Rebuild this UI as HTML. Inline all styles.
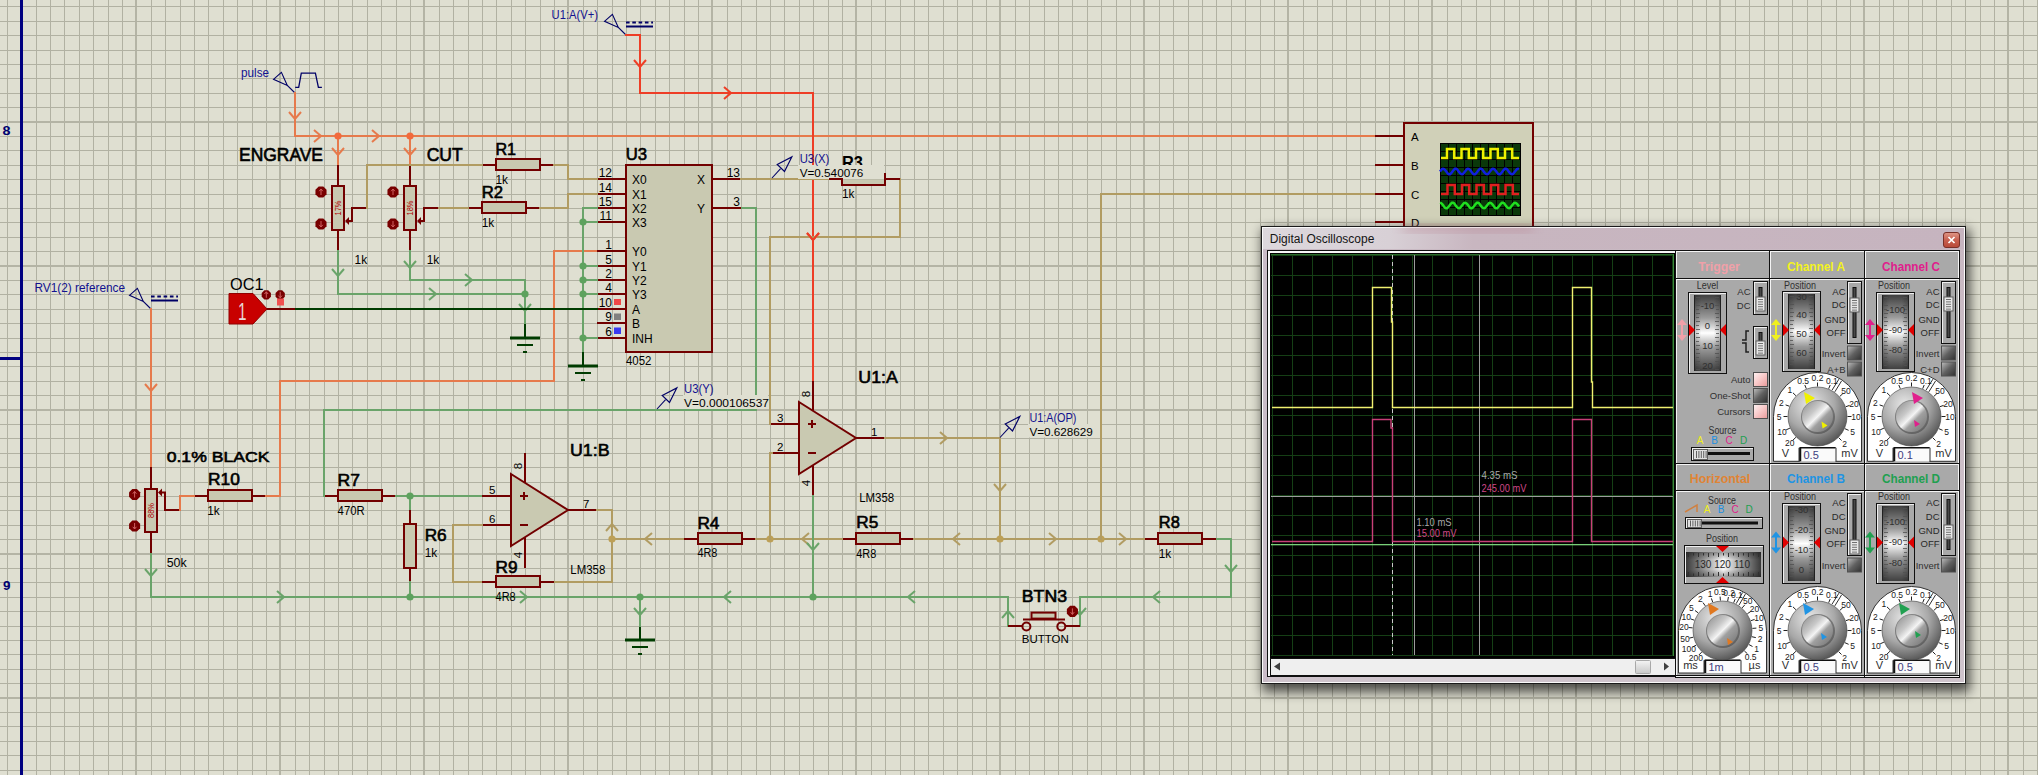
<!DOCTYPE html>
<html><head><meta charset="utf-8"><style>
html,body{margin:0;padding:0;background:#dfdfd1;overflow:hidden;}
svg{display:block;font-family:"Liberation Sans",sans-serif;}
</style></head><body>
<svg width="2038" height="775" viewBox="0 0 2038 775">
<rect width="2038" height="775" fill="#dfdfd1"/>
<g><rect x="7" y="0" width="1" height="775" fill="#b1b1a2"/><rect x="21" y="0" width="1" height="775" fill="#b1b1a2"/><rect x="36" y="0" width="1" height="775" fill="#b1b1a2"/><rect x="50" y="0" width="1" height="775" fill="#b1b1a2"/><rect x="64" y="0" width="1" height="775" fill="#b1b1a2"/><rect x="79" y="0" width="1" height="775" fill="#b1b1a2"/><rect x="93" y="0" width="1" height="775" fill="#b1b1a2"/><rect x="108" y="0" width="1" height="775" fill="#b1b1a2"/><rect x="122" y="0" width="1" height="775" fill="#b1b1a2"/><rect x="135" y="0" width="2" height="775" fill="#b4b4a5"/><rect x="151" y="0" width="1" height="775" fill="#b1b1a2"/><rect x="165" y="0" width="1" height="775" fill="#b1b1a2"/><rect x="180" y="0" width="1" height="775" fill="#b1b1a2"/><rect x="194" y="0" width="1" height="775" fill="#b1b1a2"/><rect x="208" y="0" width="1" height="775" fill="#b1b1a2"/><rect x="223" y="0" width="1" height="775" fill="#b1b1a2"/><rect x="237" y="0" width="1" height="775" fill="#b1b1a2"/><rect x="252" y="0" width="1" height="775" fill="#b1b1a2"/><rect x="266" y="0" width="1" height="775" fill="#b1b1a2"/><rect x="279" y="0" width="2" height="775" fill="#b4b4a5"/><rect x="295" y="0" width="1" height="775" fill="#b1b1a2"/><rect x="309" y="0" width="1" height="775" fill="#b1b1a2"/><rect x="324" y="0" width="1" height="775" fill="#b1b1a2"/><rect x="338" y="0" width="1" height="775" fill="#b1b1a2"/><rect x="352" y="0" width="1" height="775" fill="#b1b1a2"/><rect x="367" y="0" width="1" height="775" fill="#b1b1a2"/><rect x="381" y="0" width="1" height="775" fill="#b1b1a2"/><rect x="396" y="0" width="1" height="775" fill="#b1b1a2"/><rect x="410" y="0" width="1" height="775" fill="#b1b1a2"/><rect x="423" y="0" width="2" height="775" fill="#b4b4a5"/><rect x="439" y="0" width="1" height="775" fill="#b1b1a2"/><rect x="453" y="0" width="1" height="775" fill="#b1b1a2"/><rect x="468" y="0" width="1" height="775" fill="#b1b1a2"/><rect x="482" y="0" width="1" height="775" fill="#b1b1a2"/><rect x="496" y="0" width="1" height="775" fill="#b1b1a2"/><rect x="511" y="0" width="1" height="775" fill="#b1b1a2"/><rect x="525" y="0" width="1" height="775" fill="#b1b1a2"/><rect x="540" y="0" width="1" height="775" fill="#b1b1a2"/><rect x="554" y="0" width="1" height="775" fill="#b1b1a2"/><rect x="567" y="0" width="2" height="775" fill="#b4b4a5"/><rect x="583" y="0" width="1" height="775" fill="#b1b1a2"/><rect x="597" y="0" width="1" height="775" fill="#b1b1a2"/><rect x="612" y="0" width="1" height="775" fill="#b1b1a2"/><rect x="626" y="0" width="1" height="775" fill="#b1b1a2"/><rect x="640" y="0" width="1" height="775" fill="#b1b1a2"/><rect x="655" y="0" width="1" height="775" fill="#b1b1a2"/><rect x="669" y="0" width="1" height="775" fill="#b1b1a2"/><rect x="684" y="0" width="1" height="775" fill="#b1b1a2"/><rect x="698" y="0" width="1" height="775" fill="#b1b1a2"/><rect x="711" y="0" width="2" height="775" fill="#b4b4a5"/><rect x="727" y="0" width="1" height="775" fill="#b1b1a2"/><rect x="741" y="0" width="1" height="775" fill="#b1b1a2"/><rect x="756" y="0" width="1" height="775" fill="#b1b1a2"/><rect x="770" y="0" width="1" height="775" fill="#b1b1a2"/><rect x="784" y="0" width="1" height="775" fill="#b1b1a2"/><rect x="799" y="0" width="1" height="775" fill="#b1b1a2"/><rect x="813" y="0" width="1" height="775" fill="#b1b1a2"/><rect x="828" y="0" width="1" height="775" fill="#b1b1a2"/><rect x="842" y="0" width="1" height="775" fill="#b1b1a2"/><rect x="855" y="0" width="2" height="775" fill="#b4b4a5"/><rect x="871" y="0" width="1" height="775" fill="#b1b1a2"/><rect x="885" y="0" width="1" height="775" fill="#b1b1a2"/><rect x="900" y="0" width="1" height="775" fill="#b1b1a2"/><rect x="914" y="0" width="1" height="775" fill="#b1b1a2"/><rect x="928" y="0" width="1" height="775" fill="#b1b1a2"/><rect x="943" y="0" width="1" height="775" fill="#b1b1a2"/><rect x="957" y="0" width="1" height="775" fill="#b1b1a2"/><rect x="972" y="0" width="1" height="775" fill="#b1b1a2"/><rect x="986" y="0" width="1" height="775" fill="#b1b1a2"/><rect x="999" y="0" width="2" height="775" fill="#b4b4a5"/><rect x="1015" y="0" width="1" height="775" fill="#b1b1a2"/><rect x="1029" y="0" width="1" height="775" fill="#b1b1a2"/><rect x="1044" y="0" width="1" height="775" fill="#b1b1a2"/><rect x="1058" y="0" width="1" height="775" fill="#b1b1a2"/><rect x="1072" y="0" width="1" height="775" fill="#b1b1a2"/><rect x="1087" y="0" width="1" height="775" fill="#b1b1a2"/><rect x="1101" y="0" width="1" height="775" fill="#b1b1a2"/><rect x="1116" y="0" width="1" height="775" fill="#b1b1a2"/><rect x="1130" y="0" width="1" height="775" fill="#b1b1a2"/><rect x="1143" y="0" width="2" height="775" fill="#b4b4a5"/><rect x="1159" y="0" width="1" height="775" fill="#b1b1a2"/><rect x="1173" y="0" width="1" height="775" fill="#b1b1a2"/><rect x="1188" y="0" width="1" height="775" fill="#b1b1a2"/><rect x="1202" y="0" width="1" height="775" fill="#b1b1a2"/><rect x="1216" y="0" width="1" height="775" fill="#b1b1a2"/><rect x="1231" y="0" width="1" height="775" fill="#b1b1a2"/><rect x="1245" y="0" width="1" height="775" fill="#b1b1a2"/><rect x="1260" y="0" width="1" height="775" fill="#b1b1a2"/><rect x="1274" y="0" width="1" height="775" fill="#b1b1a2"/><rect x="1287" y="0" width="2" height="775" fill="#b4b4a5"/><rect x="1303" y="0" width="1" height="775" fill="#b1b1a2"/><rect x="1317" y="0" width="1" height="775" fill="#b1b1a2"/><rect x="1332" y="0" width="1" height="775" fill="#b1b1a2"/><rect x="1346" y="0" width="1" height="775" fill="#b1b1a2"/><rect x="1360" y="0" width="1" height="775" fill="#b1b1a2"/><rect x="1375" y="0" width="1" height="775" fill="#b1b1a2"/><rect x="1389" y="0" width="1" height="775" fill="#b1b1a2"/><rect x="1404" y="0" width="1" height="775" fill="#b1b1a2"/><rect x="1418" y="0" width="1" height="775" fill="#b1b1a2"/><rect x="1431" y="0" width="2" height="775" fill="#b4b4a5"/><rect x="1447" y="0" width="1" height="775" fill="#b1b1a2"/><rect x="1461" y="0" width="1" height="775" fill="#b1b1a2"/><rect x="1476" y="0" width="1" height="775" fill="#b1b1a2"/><rect x="1490" y="0" width="1" height="775" fill="#b1b1a2"/><rect x="1504" y="0" width="1" height="775" fill="#b1b1a2"/><rect x="1519" y="0" width="1" height="775" fill="#b1b1a2"/><rect x="1533" y="0" width="1" height="775" fill="#b1b1a2"/><rect x="1548" y="0" width="1" height="775" fill="#b1b1a2"/><rect x="1562" y="0" width="1" height="775" fill="#b1b1a2"/><rect x="1575" y="0" width="2" height="775" fill="#b4b4a5"/><rect x="1591" y="0" width="1" height="775" fill="#b1b1a2"/><rect x="1605" y="0" width="1" height="775" fill="#b1b1a2"/><rect x="1620" y="0" width="1" height="775" fill="#b1b1a2"/><rect x="1634" y="0" width="1" height="775" fill="#b1b1a2"/><rect x="1648" y="0" width="1" height="775" fill="#b1b1a2"/><rect x="1663" y="0" width="1" height="775" fill="#b1b1a2"/><rect x="1677" y="0" width="1" height="775" fill="#b1b1a2"/><rect x="1692" y="0" width="1" height="775" fill="#b1b1a2"/><rect x="1706" y="0" width="1" height="775" fill="#b1b1a2"/><rect x="1719" y="0" width="2" height="775" fill="#b4b4a5"/><rect x="1735" y="0" width="1" height="775" fill="#b1b1a2"/><rect x="1749" y="0" width="1" height="775" fill="#b1b1a2"/><rect x="1764" y="0" width="1" height="775" fill="#b1b1a2"/><rect x="1778" y="0" width="1" height="775" fill="#b1b1a2"/><rect x="1792" y="0" width="1" height="775" fill="#b1b1a2"/><rect x="1807" y="0" width="1" height="775" fill="#b1b1a2"/><rect x="1821" y="0" width="1" height="775" fill="#b1b1a2"/><rect x="1836" y="0" width="1" height="775" fill="#b1b1a2"/><rect x="1850" y="0" width="1" height="775" fill="#b1b1a2"/><rect x="1863" y="0" width="2" height="775" fill="#b4b4a5"/><rect x="1879" y="0" width="1" height="775" fill="#b1b1a2"/><rect x="1893" y="0" width="1" height="775" fill="#b1b1a2"/><rect x="1908" y="0" width="1" height="775" fill="#b1b1a2"/><rect x="1922" y="0" width="1" height="775" fill="#b1b1a2"/><rect x="1936" y="0" width="1" height="775" fill="#b1b1a2"/><rect x="1951" y="0" width="1" height="775" fill="#b1b1a2"/><rect x="1965" y="0" width="1" height="775" fill="#b1b1a2"/><rect x="1980" y="0" width="1" height="775" fill="#b1b1a2"/><rect x="1994" y="0" width="1" height="775" fill="#b1b1a2"/><rect x="2007" y="0" width="2" height="775" fill="#b4b4a5"/><rect x="2023" y="0" width="1" height="775" fill="#b1b1a2"/><rect x="2037" y="0" width="1" height="775" fill="#b1b1a2"/><rect x="0" y="6" width="2038" height="1" fill="#b1b1a2"/><rect x="0" y="21" width="2038" height="1" fill="#b1b1a2"/><rect x="0" y="35" width="2038" height="1" fill="#b1b1a2"/><rect x="0" y="50" width="2038" height="1" fill="#b1b1a2"/><rect x="0" y="64" width="2038" height="1" fill="#b1b1a2"/><rect x="0" y="78" width="2038" height="1" fill="#b1b1a2"/><rect x="0" y="93" width="2038" height="1" fill="#b1b1a2"/><rect x="0" y="107" width="2038" height="1" fill="#b1b1a2"/><rect x="0" y="121" width="2038" height="2" fill="#b4b4a5"/><rect x="0" y="136" width="2038" height="1" fill="#b1b1a2"/><rect x="0" y="150" width="2038" height="1" fill="#b1b1a2"/><rect x="0" y="165" width="2038" height="1" fill="#b1b1a2"/><rect x="0" y="179" width="2038" height="1" fill="#b1b1a2"/><rect x="0" y="194" width="2038" height="1" fill="#b1b1a2"/><rect x="0" y="208" width="2038" height="1" fill="#b1b1a2"/><rect x="0" y="222" width="2038" height="1" fill="#b1b1a2"/><rect x="0" y="237" width="2038" height="1" fill="#b1b1a2"/><rect x="0" y="251" width="2038" height="1" fill="#b1b1a2"/><rect x="0" y="265" width="2038" height="2" fill="#b4b4a5"/><rect x="0" y="280" width="2038" height="1" fill="#b1b1a2"/><rect x="0" y="294" width="2038" height="1" fill="#b1b1a2"/><rect x="0" y="309" width="2038" height="1" fill="#b1b1a2"/><rect x="0" y="323" width="2038" height="1" fill="#b1b1a2"/><rect x="0" y="338" width="2038" height="1" fill="#b1b1a2"/><rect x="0" y="352" width="2038" height="1" fill="#b1b1a2"/><rect x="0" y="366" width="2038" height="1" fill="#b1b1a2"/><rect x="0" y="381" width="2038" height="1" fill="#b1b1a2"/><rect x="0" y="395" width="2038" height="1" fill="#b1b1a2"/><rect x="0" y="409" width="2038" height="2" fill="#b4b4a5"/><rect x="0" y="424" width="2038" height="1" fill="#b1b1a2"/><rect x="0" y="438" width="2038" height="1" fill="#b1b1a2"/><rect x="0" y="453" width="2038" height="1" fill="#b1b1a2"/><rect x="0" y="467" width="2038" height="1" fill="#b1b1a2"/><rect x="0" y="482" width="2038" height="1" fill="#b1b1a2"/><rect x="0" y="496" width="2038" height="1" fill="#b1b1a2"/><rect x="0" y="510" width="2038" height="1" fill="#b1b1a2"/><rect x="0" y="525" width="2038" height="1" fill="#b1b1a2"/><rect x="0" y="539" width="2038" height="1" fill="#b1b1a2"/><rect x="0" y="553" width="2038" height="2" fill="#b4b4a5"/><rect x="0" y="568" width="2038" height="1" fill="#b1b1a2"/><rect x="0" y="582" width="2038" height="1" fill="#b1b1a2"/><rect x="0" y="597" width="2038" height="1" fill="#b1b1a2"/><rect x="0" y="611" width="2038" height="1" fill="#b1b1a2"/><rect x="0" y="626" width="2038" height="1" fill="#b1b1a2"/><rect x="0" y="640" width="2038" height="1" fill="#b1b1a2"/><rect x="0" y="654" width="2038" height="1" fill="#b1b1a2"/><rect x="0" y="669" width="2038" height="1" fill="#b1b1a2"/><rect x="0" y="683" width="2038" height="1" fill="#b1b1a2"/><rect x="0" y="697" width="2038" height="2" fill="#b4b4a5"/><rect x="0" y="712" width="2038" height="1" fill="#b1b1a2"/><rect x="0" y="726" width="2038" height="1" fill="#b1b1a2"/><rect x="0" y="741" width="2038" height="1" fill="#b1b1a2"/><rect x="0" y="755" width="2038" height="1" fill="#b1b1a2"/><rect x="0" y="770" width="2038" height="1" fill="#b1b1a2"/></g><rect x="20" y="0" width="3" height="775" fill="#000080"/><rect x="0" y="357" width="20" height="3" fill="#000080"/><text x="2.5" y="134.6" font-size="13.5" font-weight="bold" fill="#000070" textLength="8" lengthAdjust="spacingAndGlyphs">8</text><text x="3" y="590" font-size="13.5" font-weight="bold" fill="#000070" textLength="7.5" lengthAdjust="spacingAndGlyphs">9</text><polygon points="273.5,79.3 281.4,72.3 287.3,85.4" fill="none" stroke="#000066" stroke-width="1.1"/><line x1="287.3" y1="85.4" x2="295" y2="93" stroke="#000066" stroke-width="1.1" stroke-linecap="butt"/><text x="241" y="77" font-size="12" fill="#121290" textLength="28" lengthAdjust="spacingAndGlyphs">pulse</text><polyline points="295.2,87.3 298.7,87.3 301.3,73.1 315.4,73.1 318.4,87.3 321.9,87.3" fill="none" stroke="#000066" stroke-width="1.3"/><polyline points="295,93 295,136 1375,136" fill="none" stroke="#e67a4c" stroke-width="2" stroke-linejoin="miter" stroke-linecap="square"/><polyline points="289,112 295,119 301,112" fill="none" stroke="#e67a4c" stroke-width="2" stroke-linejoin="miter"/><polyline points="314,130 321,136 314,142" fill="none" stroke="#e67a4c" stroke-width="2" stroke-linejoin="miter"/><polyline points="372,130 379,136 372,142" fill="none" stroke="#e67a4c" stroke-width="2" stroke-linejoin="miter"/><polyline points="338,136 338,165" fill="none" stroke="#e67a4c" stroke-width="2" stroke-linejoin="miter" stroke-linecap="square"/><polyline points="332,148 338,155 344,148" fill="none" stroke="#e67a4c" stroke-width="2" stroke-linejoin="miter"/><circle cx="338" cy="136" r="3.6" fill="#f26a3c"/><polyline points="410,136 410,165" fill="none" stroke="#e67a4c" stroke-width="2" stroke-linejoin="miter" stroke-linecap="square"/><polyline points="404,148 410,155 416,148" fill="none" stroke="#e67a4c" stroke-width="2" stroke-linejoin="miter"/><circle cx="410" cy="136" r="3.6" fill="#f26a3c"/><line x1="626" y1="22.4" x2="653" y2="22.4" stroke="#000066" stroke-width="2" stroke-dasharray="3.6,2.7"/><line x1="626" y1="26.5" x2="653" y2="26.5" stroke="#000066" stroke-width="2" stroke-linecap="butt"/><polygon points="604.5,21.3 612.4,14.3 618.3,27.4" fill="none" stroke="#000066" stroke-width="1.1"/><line x1="618.3" y1="27.4" x2="626" y2="35" stroke="#000066" stroke-width="1.1" stroke-linecap="butt"/><text x="551.6" y="19.4" font-size="12" fill="#121290" textLength="46.4" lengthAdjust="spacingAndGlyphs">U1:A(V+)</text><polyline points="626,35 640,35 640,93 813,93 813,381" fill="none" stroke="#ee3e26" stroke-width="2" stroke-linejoin="miter" stroke-linecap="square"/><polyline points="634,60 640,67 646,60" fill="none" stroke="#ee3e26" stroke-width="2" stroke-linejoin="miter"/><polyline points="724,87 731,93 724,99" fill="none" stroke="#ee3e26" stroke-width="2" stroke-linejoin="miter"/><polyline points="807,233 813,240 819,233" fill="none" stroke="#ee3e26" stroke-width="2" stroke-linejoin="miter"/><line x1="151" y1="296.4" x2="178" y2="296.4" stroke="#000066" stroke-width="2" stroke-dasharray="3.6,2.7"/><line x1="151" y1="300.5" x2="178" y2="300.5" stroke="#000066" stroke-width="2" stroke-linecap="butt"/><polygon points="129.5,295.3 137.4,288.3 143.3,301.4" fill="none" stroke="#000066" stroke-width="1.1"/><line x1="143.3" y1="301.4" x2="151" y2="309" stroke="#000066" stroke-width="1.1" stroke-linecap="butt"/><text x="34.5" y="291.8" font-size="12" fill="#121290" textLength="90.6" lengthAdjust="spacingAndGlyphs">RV1(2) reference</text><polyline points="151,309 151,467" fill="none" stroke="#e67a4c" stroke-width="2" stroke-linejoin="miter" stroke-linecap="square"/><polyline points="145,384 151,391 157,384" fill="none" stroke="#e67a4c" stroke-width="2" stroke-linejoin="miter"/><line x1="338" y1="165" x2="338" y2="186" stroke="#720000" stroke-width="2" stroke-linecap="butt"/><line x1="338" y1="230" x2="338" y2="251" stroke="#720000" stroke-width="2" stroke-linecap="butt"/><rect x="332" y="186" width="12" height="44" fill="#c9c9b1" stroke="#720000" stroke-width="2"/><polygon points="345,221 349,217 349,225" fill="#720000"/><polyline points="348,221 352,221 352,208 367,208" fill="none" stroke="#720000" stroke-width="2"/><text x="0" y="0" font-size="8.5" fill="#b00000" transform="translate(341,208.0) rotate(-90)" text-anchor="middle" textLength="15" lengthAdjust="spacingAndGlyphs">17%</text><polygon points="326.54,194.3 323.3,197.54 318.7,197.54 315.46,194.3 315.46,189.7 318.7,186.46 323.3,186.46 326.54,189.7" fill="#780000"/><path d="M319.2,191.2 L321,189 L322.8,191.2 M321,189 L321,195" stroke="#d06060" stroke-width="1" fill="none"/><polygon points="326.54,226.3 323.3,229.54 318.7,229.54 315.46,226.3 315.46,221.7 318.7,218.46 323.3,218.46 326.54,221.7" fill="#780000"/><path d="M319.2,224.8 L321,227 L322.8,224.8 M321,221 L321,227" stroke="#d06060" stroke-width="1" fill="none"/><line x1="410" y1="165" x2="410" y2="186" stroke="#720000" stroke-width="2" stroke-linecap="butt"/><line x1="410" y1="230" x2="410" y2="251" stroke="#720000" stroke-width="2" stroke-linecap="butt"/><rect x="404" y="186" width="12" height="44" fill="#c9c9b1" stroke="#720000" stroke-width="2"/><polygon points="417,221 421,217 421,225" fill="#720000"/><polyline points="420,221 424,221 424,208 439,208" fill="none" stroke="#720000" stroke-width="2"/><text x="0" y="0" font-size="8.5" fill="#b00000" transform="translate(413,208.0) rotate(-90)" text-anchor="middle" textLength="15" lengthAdjust="spacingAndGlyphs">18%</text><polygon points="398.54,194.3 395.3,197.54 390.7,197.54 387.46,194.3 387.46,189.7 390.7,186.46 395.3,186.46 398.54,189.7" fill="#780000"/><path d="M391.2,191.2 L393,189 L394.8,191.2 M393,189 L393,195" stroke="#d06060" stroke-width="1" fill="none"/><polygon points="398.54,226.3 395.3,229.54 390.7,229.54 387.46,226.3 387.46,221.7 390.7,218.46 395.3,218.46 398.54,221.7" fill="#780000"/><path d="M391.2,224.8 L393,227 L394.8,224.8 M393,221 L393,227" stroke="#d06060" stroke-width="1" fill="none"/><line x1="151" y1="467" x2="151" y2="489" stroke="#720000" stroke-width="2" stroke-linecap="butt"/><line x1="151" y1="532" x2="151" y2="554" stroke="#720000" stroke-width="2" stroke-linecap="butt"/><rect x="145" y="489" width="12" height="43" fill="#c9c9b1" stroke="#720000" stroke-width="2"/><polygon points="158,492.5 162,488.5 162,496.5" fill="#720000"/><polyline points="161,492.5 165,492.5 165,510 180,510" fill="none" stroke="#720000" stroke-width="2"/><text x="0" y="0" font-size="8.5" fill="#b00000" transform="translate(154,510.5) rotate(-90)" text-anchor="middle" textLength="15" lengthAdjust="spacingAndGlyphs">88%</text><polygon points="140.14,496.8 136.9,500.04 132.3,500.04 129.06,496.8 129.06,492.2 132.3,488.96 136.9,488.96 140.14,492.2" fill="#780000"/><path d="M132.79999999999998,493.7 L134.6,491.5 L136.4,493.7 M134.6,491.5 L134.6,497.5" stroke="#d06060" stroke-width="1" fill="none"/><polygon points="140.14,528.3 136.9,531.54 132.3,531.54 129.06,528.3 129.06,523.7 132.3,520.46 136.9,520.46 140.14,523.7" fill="#780000"/><path d="M132.79999999999998,526.8 L134.6,529 L136.4,526.8 M134.6,523 L134.6,529" stroke="#d06060" stroke-width="1" fill="none"/><text x="239" y="161" font-size="17.5" fill="#000" stroke="#000" stroke-width="0.6" textLength="84" lengthAdjust="spacingAndGlyphs">ENGRAVE</text><text x="426.7" y="161" font-size="17.5" fill="#000" stroke="#000" stroke-width="0.6" textLength="36" lengthAdjust="spacingAndGlyphs">CUT</text><text x="354.6" y="264" font-size="12" fill="#000" textLength="12.5" lengthAdjust="spacingAndGlyphs">1k</text><text x="426.8" y="264" font-size="12" fill="#000" textLength="12.5" lengthAdjust="spacingAndGlyphs">1k</text><text x="166.7" y="567" font-size="12" fill="#000" textLength="20" lengthAdjust="spacingAndGlyphs">50k</text><line x1="194" y1="496" x2="208" y2="496" stroke="#720000" stroke-width="2" stroke-linecap="butt"/><line x1="252" y1="496" x2="266" y2="496" stroke="#720000" stroke-width="2" stroke-linecap="butt"/><rect x="208" y="490" width="44" height="11" fill="#c9c9b1" stroke="#720000" stroke-width="2"/><polyline points="180,510 180,496 194,496" fill="none" stroke="#e67a4c" stroke-width="2" stroke-linejoin="miter" stroke-linecap="square"/><text x="208" y="484.7" font-size="16" fill="#000" stroke="#000" stroke-width="0.6" textLength="31.8" lengthAdjust="spacingAndGlyphs">R10</text><text x="207.3" y="515" font-size="12" fill="#000" textLength="12.5" lengthAdjust="spacingAndGlyphs">1k</text><text x="166.7" y="462.2" font-size="15.5" fill="#000" stroke="#000" stroke-width="0.6" textLength="102.7" lengthAdjust="spacingAndGlyphs">0.1% BLACK</text><polyline points="266,496 280,496 280,381 554,381 554,251 597,251" fill="none" stroke="#e67a4c" stroke-width="2" stroke-linejoin="miter" stroke-linecap="square"/><polyline points="151,554 151,597 1008,597 1008,626" fill="none" stroke="#6aa46a" stroke-width="2" stroke-linejoin="miter" stroke-linecap="square"/><polyline points="145,569 151,576 157,569" fill="none" stroke="#6aa46a" stroke-width="2" stroke-linejoin="miter"/><polyline points="277,591 284,597 277,603" fill="none" stroke="#6aa46a" stroke-width="2" stroke-linejoin="miter"/><polyline points="520,591 527,597 520,603" fill="none" stroke="#6aa46a" stroke-width="2" stroke-linejoin="miter"/><polyline points="731,591 724,597 731,603" fill="none" stroke="#6aa46a" stroke-width="2" stroke-linejoin="miter"/><polyline points="915,591 908,597 915,603" fill="none" stroke="#6aa46a" stroke-width="2" stroke-linejoin="miter"/><polyline points="1002,618 1008,611 1014,618" fill="none" stroke="#6aa46a" stroke-width="2" stroke-linejoin="miter"/><polyline points="1216,539 1231,539 1231,597 1080,597 1080,626" fill="none" stroke="#6aa46a" stroke-width="2" stroke-linejoin="miter" stroke-linecap="square"/><polyline points="1225,565 1231,572 1237,565" fill="none" stroke="#6aa46a" stroke-width="2" stroke-linejoin="miter"/><polyline points="1160,591 1153,597 1160,603" fill="none" stroke="#6aa46a" stroke-width="2" stroke-linejoin="miter"/><polyline points="1074,608 1080,615 1086,608" fill="none" stroke="#6aa46a" stroke-width="2" stroke-linejoin="miter"/><line x1="324" y1="496" x2="338" y2="496" stroke="#720000" stroke-width="2" stroke-linecap="butt"/><line x1="382" y1="496" x2="396" y2="496" stroke="#720000" stroke-width="2" stroke-linecap="butt"/><rect x="338" y="490" width="44" height="11" fill="#c9c9b1" stroke="#720000" stroke-width="2"/><text x="337.6" y="486" font-size="16" fill="#000" stroke="#000" stroke-width="0.6" textLength="22.4" lengthAdjust="spacingAndGlyphs">R7</text><text x="337.6" y="515" font-size="12" fill="#000" textLength="27" lengthAdjust="spacingAndGlyphs">470R</text><polyline points="324,496 324,410 756,410 756,208 741,208" fill="none" stroke="#6aa46a" stroke-width="2" stroke-linejoin="miter" stroke-linecap="square"/><polyline points="396,496 482,496" fill="none" stroke="#6aa46a" stroke-width="2" stroke-linejoin="miter" stroke-linecap="square"/><polyline points="410,496 410,510" fill="none" stroke="#6aa46a" stroke-width="2" stroke-linejoin="miter" stroke-linecap="square"/><circle cx="410" cy="496" r="3.6" fill="#5ea25e"/><line x1="410" y1="510" x2="410" y2="524" stroke="#720000" stroke-width="2" stroke-linecap="butt"/><line x1="410" y1="568" x2="410" y2="582" stroke="#720000" stroke-width="2" stroke-linecap="butt"/><rect x="404" y="524" width="12" height="44" fill="#c9c9b1" stroke="#720000" stroke-width="2"/><polyline points="410,582 410,597" fill="none" stroke="#6aa46a" stroke-width="2" stroke-linejoin="miter" stroke-linecap="square"/><circle cx="410" cy="597" r="3.6" fill="#5ea25e"/><text x="424.7" y="541.3" font-size="16" fill="#000" stroke="#000" stroke-width="0.6" textLength="22" lengthAdjust="spacingAndGlyphs">R6</text><text x="424.7" y="556.7" font-size="12" fill="#000" textLength="12.5" lengthAdjust="spacingAndGlyphs">1k</text><line x1="482" y1="496" x2="511" y2="496" stroke="#720000" stroke-width="2" stroke-linecap="butt"/><line x1="482" y1="525" x2="511" y2="525" stroke="#720000" stroke-width="2" stroke-linecap="butt"/><line x1="568" y1="510" x2="597" y2="510" stroke="#720000" stroke-width="2" stroke-linecap="butt"/><line x1="525" y1="453" x2="525" y2="482.8421052631579" stroke="#720000" stroke-width="2" stroke-linecap="butt"/><line x1="525" y1="537.1578947368421" x2="525" y2="568" stroke="#720000" stroke-width="2" stroke-linecap="butt"/><polygon points="511,474 568,510 511,546" fill="#c9c9b1" stroke="#720000" stroke-width="2" stroke-linejoin="miter"/><path d="M520,496 h8 M524,492 v8" stroke="#720000" stroke-width="2"/><path d="M520,525 h8" stroke="#720000" stroke-width="2"/><text x="489" y="494" font-size="11.5" fill="#000">5</text><text x="489" y="523" font-size="11.5" fill="#000">6</text><text x="583" y="508" font-size="11.5" fill="#000">7</text><text x="0" y="0" font-size="11.5" transform="translate(522,466) rotate(-90)" text-anchor="middle">8</text><text x="0" y="0" font-size="11.5" transform="translate(522,555) rotate(-90)" text-anchor="middle">4</text><text x="570" y="456" font-size="16.5" fill="#000" stroke="#000" stroke-width="0.6" textLength="39.5" lengthAdjust="spacingAndGlyphs">U1:B</text><text x="570.3" y="574" font-size="12" fill="#000" textLength="35" lengthAdjust="spacingAndGlyphs">LM358</text><line x1="770" y1="424" x2="799" y2="424" stroke="#720000" stroke-width="2" stroke-linecap="butt"/><line x1="770" y1="453" x2="799" y2="453" stroke="#720000" stroke-width="2" stroke-linecap="butt"/><line x1="856" y1="438" x2="885" y2="438" stroke="#720000" stroke-width="2" stroke-linecap="butt"/><line x1="813" y1="381" x2="813" y2="410.8421052631579" stroke="#720000" stroke-width="2" stroke-linecap="butt"/><line x1="813" y1="465.1578947368421" x2="813" y2="496" stroke="#720000" stroke-width="2" stroke-linecap="butt"/><polygon points="799,402 856,438 799,474" fill="#c9c9b1" stroke="#720000" stroke-width="2" stroke-linejoin="miter"/><path d="M808,424 h8 M812,420 v8" stroke="#720000" stroke-width="2"/><path d="M808,453 h8" stroke="#720000" stroke-width="2"/><text x="777" y="422" font-size="11.5" fill="#000">3</text><text x="777" y="451" font-size="11.5" fill="#000">2</text><text x="871" y="436" font-size="11.5" fill="#000">1</text><text x="0" y="0" font-size="11.5" transform="translate(810,394) rotate(-90)" text-anchor="middle">8</text><text x="0" y="0" font-size="11.5" transform="translate(810,483) rotate(-90)" text-anchor="middle">4</text><text x="858.3" y="383.3" font-size="16.5" fill="#000" stroke="#000" stroke-width="0.6" textLength="39.5" lengthAdjust="spacingAndGlyphs">U1:A</text><text x="859.2" y="501.6" font-size="12" fill="#000" textLength="35" lengthAdjust="spacingAndGlyphs">LM358</text><polyline points="597,510 612,510 612,582 554,582" fill="none" stroke="#b19c62" stroke-width="2" stroke-linejoin="miter" stroke-linecap="square"/><polyline points="606,531 612,524 618,531" fill="none" stroke="#b19c62" stroke-width="2" stroke-linejoin="miter"/><polyline points="612,539 684,539" fill="none" stroke="#b19c62" stroke-width="2" stroke-linejoin="miter" stroke-linecap="square"/><polyline points="652,533 645,539 652,545" fill="none" stroke="#b19c62" stroke-width="2" stroke-linejoin="miter"/><circle cx="612" cy="539" r="3.6" fill="#bda057"/><polyline points="482,525 453,525 453,582 482,582" fill="none" stroke="#b19c62" stroke-width="2" stroke-linejoin="miter" stroke-linecap="square"/><line x1="482" y1="582" x2="496" y2="582" stroke="#720000" stroke-width="2" stroke-linecap="butt"/><line x1="540" y1="582" x2="554" y2="582" stroke="#720000" stroke-width="2" stroke-linecap="butt"/><rect x="496" y="576" width="44" height="11" fill="#c9c9b1" stroke="#720000" stroke-width="2"/><text x="495.6" y="573" font-size="16" fill="#000" stroke="#000" stroke-width="0.6" textLength="22" lengthAdjust="spacingAndGlyphs">R9</text><text x="495.6" y="601" font-size="12" fill="#000" textLength="20" lengthAdjust="spacingAndGlyphs">4R8</text><line x1="684" y1="539" x2="698" y2="539" stroke="#720000" stroke-width="2" stroke-linecap="butt"/><line x1="742" y1="539" x2="756" y2="539" stroke="#720000" stroke-width="2" stroke-linecap="butt"/><rect x="698" y="533" width="44" height="11" fill="#c9c9b1" stroke="#720000" stroke-width="2"/><text x="697.4" y="528.5" font-size="16" fill="#000" stroke="#000" stroke-width="0.6" textLength="22" lengthAdjust="spacingAndGlyphs">R4</text><text x="697.4" y="557.4" font-size="12" fill="#000" textLength="20" lengthAdjust="spacingAndGlyphs">4R8</text><line x1="842" y1="539" x2="856" y2="539" stroke="#720000" stroke-width="2" stroke-linecap="butt"/><line x1="900" y1="539" x2="914" y2="539" stroke="#720000" stroke-width="2" stroke-linecap="butt"/><rect x="856" y="533" width="44" height="11" fill="#c9c9b1" stroke="#720000" stroke-width="2"/><text x="856.3" y="528" font-size="16" fill="#000" stroke="#000" stroke-width="0.6" textLength="22" lengthAdjust="spacingAndGlyphs">R5</text><text x="856.3" y="557.5" font-size="12" fill="#000" textLength="20" lengthAdjust="spacingAndGlyphs">4R8</text><line x1="1144" y1="539" x2="1158" y2="539" stroke="#720000" stroke-width="2" stroke-linecap="butt"/><line x1="1202" y1="539" x2="1216" y2="539" stroke="#720000" stroke-width="2" stroke-linecap="butt"/><rect x="1158" y="533" width="44" height="11" fill="#c9c9b1" stroke="#720000" stroke-width="2"/><text x="1158.8" y="528.3" font-size="16" fill="#000" stroke="#000" stroke-width="0.6" textLength="21" lengthAdjust="spacingAndGlyphs">R8</text><text x="1158.8" y="557.6" font-size="12" fill="#000" textLength="12.5" lengthAdjust="spacingAndGlyphs">1k</text><polyline points="756,539 842,539" fill="none" stroke="#b19c62" stroke-width="2" stroke-linejoin="miter" stroke-linecap="square"/><polyline points="809,533 802,539 809,545" fill="none" stroke="#b19c62" stroke-width="2" stroke-linejoin="miter"/><circle cx="770" cy="539" r="3.6" fill="#bda057"/><polyline points="770,539 770,453 772,453" fill="none" stroke="#b19c62" stroke-width="2" stroke-linejoin="miter" stroke-linecap="square"/><polyline points="770,424 770,237 900,237 900,179" fill="none" stroke="#b19c62" stroke-width="2" stroke-linejoin="miter" stroke-linecap="square"/><polyline points="807,233 813,240 819,233" fill="none" stroke="#ee3e26" stroke-width="2" stroke-linejoin="miter"/><polyline points="885,438 1000,438 1000,539" fill="none" stroke="#b19c62" stroke-width="2" stroke-linejoin="miter" stroke-linecap="square"/><polyline points="940,432 947,438 940,444" fill="none" stroke="#b19c62" stroke-width="2" stroke-linejoin="miter"/><polyline points="994,484 1000,491 1006,484" fill="none" stroke="#b19c62" stroke-width="2" stroke-linejoin="miter"/><polyline points="914,539 1144,539" fill="none" stroke="#b19c62" stroke-width="2" stroke-linejoin="miter" stroke-linecap="square"/><polyline points="960,533 953,539 960,545" fill="none" stroke="#b19c62" stroke-width="2" stroke-linejoin="miter"/><polyline points="1049,533 1056,539 1049,545" fill="none" stroke="#b19c62" stroke-width="2" stroke-linejoin="miter"/><polyline points="1119,533 1126,539 1119,545" fill="none" stroke="#b19c62" stroke-width="2" stroke-linejoin="miter"/><circle cx="1000" cy="539" r="3.6" fill="#bda057"/><circle cx="1101" cy="539" r="3.6" fill="#bda057"/><polyline points="1101,539 1101,194 1375,194" fill="none" stroke="#b19c62" stroke-width="2" stroke-linejoin="miter" stroke-linecap="square"/><polyline points="813,496 813,597" fill="none" stroke="#6aa46a" stroke-width="2" stroke-linejoin="miter" stroke-linecap="square"/><polyline points="807,543 813,550 819,543" fill="none" stroke="#6aa46a" stroke-width="2" stroke-linejoin="miter"/><circle cx="813" cy="597" r="3.6" fill="#5ea25e"/><polyline points="640,597 640,627" fill="none" stroke="#6aa46a" stroke-width="2" stroke-linejoin="miter" stroke-linecap="square"/><polyline points="634,608 640,615 646,608" fill="none" stroke="#6aa46a" stroke-width="2" stroke-linejoin="miter"/><circle cx="640" cy="597" r="3.6" fill="#5ea25e"/><line x1="640" y1="627" x2="640" y2="640" stroke="#003c00" stroke-width="2" stroke-linecap="butt"/><line x1="625" y1="640" x2="655" y2="640" stroke="#003c00" stroke-width="3" stroke-linecap="butt"/><line x1="632" y1="647" x2="648" y2="647" stroke="#003c00" stroke-width="2" stroke-linecap="butt"/><line x1="638" y1="654" x2="642" y2="654" stroke="#003c00" stroke-width="2" stroke-linecap="butt"/><line x1="1008" y1="626" x2="1022" y2="626" stroke="#720000" stroke-width="2" stroke-linecap="butt"/><line x1="1066" y1="626" x2="1080" y2="626" stroke="#720000" stroke-width="2" stroke-linecap="butt"/><circle cx="1026.4" cy="626.5" r="4" fill="none" stroke="#720000" stroke-width="2"/><circle cx="1061.3" cy="626.5" r="4" fill="none" stroke="#720000" stroke-width="2"/><line x1="1023" y1="619.6" x2="1065" y2="619.6" stroke="#720000" stroke-width="2" stroke-linecap="butt"/><rect x="1031.5" y="612.6" width="24" height="6" fill="#c9c9b1" stroke="#720000" stroke-width="2"/><text x="1021.8" y="602.2" font-size="16" fill="#000" stroke="#000" stroke-width="0.6" textLength="45.2" lengthAdjust="spacingAndGlyphs">BTN3</text><text x="1021.8" y="642.8" font-size="11.5" fill="#000" textLength="47" lengthAdjust="spacingAndGlyphs">BUTTON</text><polygon points="1077.94,613.7 1074.7,616.94 1070.1,616.94 1066.86,613.7 1066.86,609.1 1070.1,605.86 1074.7,605.86 1077.94,609.1" fill="#780000"/><path d="M1070.6000000000001,612.1999999999999 L1072.4,614.4 L1074.2,612.1999999999999 M1072.4,608.4 L1072.4,614.4" stroke="#d06060" stroke-width="1" fill="none"/><rect x="626" y="165" width="86" height="187" fill="#c9c9b1" stroke="#720000" stroke-width="2"/><text x="625.7" y="159.6" font-size="16" fill="#000" stroke="#000" stroke-width="0.6" textLength="21.3" lengthAdjust="spacingAndGlyphs">U3</text><text x="626" y="364.6" font-size="12" fill="#000" textLength="25.4" lengthAdjust="spacingAndGlyphs">4052</text><line x1="597" y1="179" x2="626" y2="179" stroke="#720000" stroke-width="2" stroke-linecap="butt"/><text x="612" y="177" font-size="12" fill="#000" text-anchor="end">12</text><text x="632" y="184" font-size="12" fill="#000">X0</text><line x1="597" y1="194" x2="626" y2="194" stroke="#720000" stroke-width="2" stroke-linecap="butt"/><text x="612" y="192" font-size="12" fill="#000" text-anchor="end">14</text><text x="632" y="199" font-size="12" fill="#000">X1</text><line x1="597" y1="208" x2="626" y2="208" stroke="#720000" stroke-width="2" stroke-linecap="butt"/><text x="612" y="206" font-size="12" fill="#000" text-anchor="end">15</text><text x="632" y="213" font-size="12" fill="#000">X2</text><line x1="597" y1="222" x2="626" y2="222" stroke="#720000" stroke-width="2" stroke-linecap="butt"/><text x="612" y="220" font-size="12" fill="#000" text-anchor="end">11</text><text x="632" y="227" font-size="12" fill="#000">X3</text><line x1="597" y1="251" x2="626" y2="251" stroke="#720000" stroke-width="2" stroke-linecap="butt"/><text x="612" y="249" font-size="12" fill="#000" text-anchor="end">1</text><text x="632" y="256" font-size="12" fill="#000">Y0</text><line x1="597" y1="266" x2="626" y2="266" stroke="#720000" stroke-width="2" stroke-linecap="butt"/><text x="612" y="264" font-size="12" fill="#000" text-anchor="end">5</text><text x="632" y="271" font-size="12" fill="#000">Y1</text><line x1="597" y1="280" x2="626" y2="280" stroke="#720000" stroke-width="2" stroke-linecap="butt"/><text x="612" y="278" font-size="12" fill="#000" text-anchor="end">2</text><text x="632" y="285" font-size="12" fill="#000">Y2</text><line x1="597" y1="294" x2="626" y2="294" stroke="#720000" stroke-width="2" stroke-linecap="butt"/><text x="612" y="292" font-size="12" fill="#000" text-anchor="end">4</text><text x="632" y="299" font-size="12" fill="#000">Y3</text><line x1="597" y1="309" x2="626" y2="309" stroke="#720000" stroke-width="2" stroke-linecap="butt"/><text x="612" y="307" font-size="12" fill="#000" text-anchor="end">10</text><text x="632" y="314" font-size="12" fill="#000">A</text><line x1="597" y1="323" x2="626" y2="323" stroke="#720000" stroke-width="2" stroke-linecap="butt"/><text x="612" y="321" font-size="12" fill="#000" text-anchor="end">9</text><text x="632" y="328" font-size="12" fill="#000">B</text><line x1="597" y1="338" x2="626" y2="338" stroke="#720000" stroke-width="2" stroke-linecap="butt"/><text x="612" y="336" font-size="12" fill="#000" text-anchor="end">6</text><text x="632" y="343" font-size="12" fill="#000">INH</text><line x1="712" y1="179" x2="741" y2="179" stroke="#720000" stroke-width="2" stroke-linecap="butt"/><text x="740" y="177" font-size="12" fill="#000" text-anchor="end">13</text><text x="705" y="184" font-size="12" fill="#000" text-anchor="end">X</text><line x1="712" y1="208" x2="741" y2="208" stroke="#720000" stroke-width="2" stroke-linecap="butt"/><text x="740" y="206" font-size="12" fill="#000" text-anchor="end">3</text><text x="705" y="213" font-size="12" fill="#000" text-anchor="end">Y</text><rect x="614" y="299" width="7" height="6" fill="#f04848"/><rect x="614" y="313.5" width="7" height="6.5" fill="#808080"/><rect x="614" y="327.5" width="7" height="6.5" fill="#3a3af0"/><polyline points="741,179 842,179" fill="none" stroke="#b19c62" stroke-width="2" stroke-linejoin="miter" stroke-linecap="square"/><line x1="482" y1="165" x2="496" y2="165" stroke="#720000" stroke-width="2" stroke-linecap="butt"/><line x1="540" y1="165" x2="554" y2="165" stroke="#720000" stroke-width="2" stroke-linecap="butt"/><rect x="496" y="159" width="44" height="11" fill="#c9c9b1" stroke="#720000" stroke-width="2"/><text x="495.4" y="154.8" font-size="16" fill="#000" stroke="#000" stroke-width="0.6" textLength="20.6" lengthAdjust="spacingAndGlyphs">R1</text><text x="495.4" y="184" font-size="12" fill="#000" textLength="12.5" lengthAdjust="spacingAndGlyphs">1k</text><line x1="468" y1="208" x2="482" y2="208" stroke="#720000" stroke-width="2" stroke-linecap="butt"/><line x1="526" y1="208" x2="540" y2="208" stroke="#720000" stroke-width="2" stroke-linecap="butt"/><rect x="482" y="202" width="44" height="11" fill="#c9c9b1" stroke="#720000" stroke-width="2"/><text x="481.7" y="197.6" font-size="16" fill="#000" stroke="#000" stroke-width="0.6" textLength="21.3" lengthAdjust="spacingAndGlyphs">R2</text><text x="481.7" y="226.6" font-size="12" fill="#000" textLength="12.5" lengthAdjust="spacingAndGlyphs">1k</text><polyline points="367,208 367,165 482,165" fill="none" stroke="#b19c62" stroke-width="2" stroke-linejoin="miter" stroke-linecap="square"/><polyline points="439,208 468,208" fill="none" stroke="#b19c62" stroke-width="2" stroke-linejoin="miter" stroke-linecap="square"/><polyline points="554,165 568,165 568,179 597,179" fill="none" stroke="#b19c62" stroke-width="2" stroke-linejoin="miter" stroke-linecap="square"/><polyline points="540,208 568,208 568,194 597,194" fill="none" stroke="#b19c62" stroke-width="2" stroke-linejoin="miter" stroke-linecap="square"/><polyline points="338,251 338,294 525,294" fill="none" stroke="#6aa46a" stroke-width="2" stroke-linejoin="miter" stroke-linecap="square"/><polyline points="332,269 338,276 344,269" fill="none" stroke="#6aa46a" stroke-width="2" stroke-linejoin="miter"/><polyline points="429,288 436,294 429,300" fill="none" stroke="#6aa46a" stroke-width="2" stroke-linejoin="miter"/><polyline points="410,251 410,280 525,280 525,324" fill="none" stroke="#6aa46a" stroke-width="2" stroke-linejoin="miter" stroke-linecap="square"/><polyline points="404,261 410,268 416,261" fill="none" stroke="#6aa46a" stroke-width="2" stroke-linejoin="miter"/><polyline points="465,274 472,280 465,286" fill="none" stroke="#6aa46a" stroke-width="2" stroke-linejoin="miter"/><polyline points="519,304 525,311 531,304" fill="none" stroke="#6aa46a" stroke-width="2" stroke-linejoin="miter"/><circle cx="525" cy="294" r="3.6" fill="#5ea25e"/><line x1="525" y1="324" x2="525" y2="338" stroke="#003c00" stroke-width="2" stroke-linecap="butt"/><line x1="510" y1="338" x2="540" y2="338" stroke="#003c00" stroke-width="3" stroke-linecap="butt"/><line x1="517" y1="345" x2="533" y2="345" stroke="#003c00" stroke-width="2" stroke-linecap="butt"/><line x1="523" y1="352" x2="527" y2="352" stroke="#003c00" stroke-width="2" stroke-linecap="butt"/><polyline points="597,208 583,208 583,352" fill="none" stroke="#6aa46a" stroke-width="2" stroke-linejoin="miter" stroke-linecap="square"/><polyline points="583,222 597,222" fill="none" stroke="#6aa46a" stroke-width="2" stroke-linejoin="miter" stroke-linecap="square"/><circle cx="583" cy="222" r="3.6" fill="#5ea25e"/><polyline points="583,266 597,266" fill="none" stroke="#6aa46a" stroke-width="2" stroke-linejoin="miter" stroke-linecap="square"/><circle cx="583" cy="266" r="3.6" fill="#5ea25e"/><polyline points="583,280 597,280" fill="none" stroke="#6aa46a" stroke-width="2" stroke-linejoin="miter" stroke-linecap="square"/><circle cx="583" cy="280" r="3.6" fill="#5ea25e"/><polyline points="583,294 597,294" fill="none" stroke="#6aa46a" stroke-width="2" stroke-linejoin="miter" stroke-linecap="square"/><circle cx="583" cy="294" r="3.6" fill="#5ea25e"/><polyline points="583,338 597,338" fill="none" stroke="#6aa46a" stroke-width="2" stroke-linejoin="miter" stroke-linecap="square"/><circle cx="583" cy="338" r="3.6" fill="#5ea25e"/><line x1="583" y1="352" x2="583" y2="366" stroke="#003c00" stroke-width="2" stroke-linecap="butt"/><line x1="568" y1="366" x2="598" y2="366" stroke="#003c00" stroke-width="3" stroke-linecap="butt"/><line x1="575" y1="373" x2="591" y2="373" stroke="#003c00" stroke-width="2" stroke-linecap="butt"/><line x1="581" y1="380" x2="585" y2="380" stroke="#003c00" stroke-width="2" stroke-linecap="butt"/><polyline points="295,309 597,309" fill="none" stroke="#003c00" stroke-width="2" stroke-linejoin="miter" stroke-linecap="square"/><line x1="267" y1="309" x2="295" y2="309" stroke="#720000" stroke-width="2" stroke-linecap="butt"/><polygon points="229,293.5 253,293.5 267,309 253,324 229,324" fill="#c80000" stroke="#900000" stroke-width="1"/><text x="238" y="319.5" font-size="23" fill="#e8d8d8" textLength="8.5" lengthAdjust="spacingAndGlyphs">1</text><text x="230" y="289.5" font-size="16.5" fill="#000" textLength="33.5" lengthAdjust="spacingAndGlyphs">OC1</text><polygon points="270.92,296.71 268.21,299.42 264.39,299.42 261.68,296.71 261.68,292.89 264.39,290.18 268.21,290.18 270.92,292.89" fill="#780000"/><path d="M264.5,294.0 L266.3,291.8 L268.1,294.0 M266.3,291.8 L266.3,297.8" stroke="#d06060" stroke-width="1" fill="none"/><polygon points="284.82,296.71 282.11,299.42 278.29,299.42 275.58,296.71 275.58,292.89 278.29,290.18 282.11,290.18 284.82,292.89" fill="#780000"/><path d="M278.4,295.6 L280.2,297.8 L282.0,295.6 M280.2,291.8 L280.2,297.8" stroke="#d06060" stroke-width="1" fill="none"/><rect x="277" y="298.5" width="7" height="7" fill="#f05050"/><line x1="772" y1="178" x2="780.6" y2="168.7" stroke="#000066" stroke-width="1.1" stroke-linecap="butt"/><polygon points="777.2,164.5 791.8,157 784.5,171.5" fill="none" stroke="#000066" stroke-width="1.2"/><rect x="798" y="165" width="86" height="14" fill="#dfdfd1"/><text x="799.7" y="162.8" font-size="12" fill="#121290" textLength="29.5" lengthAdjust="spacingAndGlyphs">U3(X)</text><text x="799.7" y="176.5" font-size="11.5" fill="#000" textLength="63.5" lengthAdjust="spacingAndGlyphs">V=0.540076</text><path d="M829,179 H842 V185 H885 V173" fill="none" stroke="#720000" stroke-width="2"/><rect x="843" y="179.5" width="41" height="4.5" fill="#c9c9b1"/><line x1="885" y1="179" x2="900" y2="179" stroke="#720000" stroke-width="2" stroke-linecap="butt"/><text x="841.9" y="197.8" font-size="12" fill="#000" textLength="12.5" lengthAdjust="spacingAndGlyphs">1k</text><svg x="835" y="150" width="40" height="15" overflow="hidden"><text x="6.9" y="19" font-size="17.5" font-weight="bold" textLength="21" lengthAdjust="spacingAndGlyphs">R3</text></svg><line x1="657" y1="409" x2="665.6" y2="399.7" stroke="#000066" stroke-width="1.1" stroke-linecap="butt"/><polygon points="662.2,395.5 676.8,388 669.5,402.5" fill="none" stroke="#000066" stroke-width="1.2"/><rect x="683" y="395" width="85" height="14" fill="#dfdfd1"/><text x="684" y="393.3" font-size="12" fill="#121290" textLength="29.5" lengthAdjust="spacingAndGlyphs">U3(Y)</text><text x="684" y="406.7" font-size="11.5" fill="#000" textLength="85" lengthAdjust="spacingAndGlyphs">V=0.000106537</text><line x1="1000" y1="437.5" x2="1008.6" y2="428.2" stroke="#000066" stroke-width="1.1" stroke-linecap="butt"/><polygon points="1005.2,424.0 1019.8,416.5 1012.5,431.0" fill="none" stroke="#000066" stroke-width="1.2"/><rect x="1028" y="424" width="72" height="13.5" fill="#dfdfd1"/><text x="1029.4" y="422.4" font-size="12" fill="#121290" textLength="47" lengthAdjust="spacingAndGlyphs">U1:A(OP)</text><text x="1029.4" y="435.8" font-size="11.5" fill="#000" textLength="63.5" lengthAdjust="spacingAndGlyphs">V=0.628629</text><rect x="1404" y="123" width="129" height="110" fill="#d0d0b8" stroke="#720000" stroke-width="2"/><line x1="1375" y1="136" x2="1404" y2="136" stroke="#720000" stroke-width="2" stroke-linecap="butt"/><text x="1411" y="141" font-size="11.5" fill="#000">A</text><line x1="1375" y1="165" x2="1404" y2="165" stroke="#720000" stroke-width="2" stroke-linecap="butt"/><text x="1411" y="170" font-size="11.5" fill="#000">B</text><line x1="1375" y1="194" x2="1404" y2="194" stroke="#720000" stroke-width="2" stroke-linecap="butt"/><text x="1411" y="199" font-size="11.5" fill="#000">C</text><line x1="1375" y1="222" x2="1404" y2="222" stroke="#720000" stroke-width="2" stroke-linecap="butt"/><text x="1411" y="227" font-size="11.5" fill="#000">D</text><rect x="1440" y="143" width="80" height="73" fill="#0a380a"/><line x1="1440.5" y1="143" x2="1440.5" y2="216" stroke="#000" stroke-width="1"/><line x1="1448.5" y1="143" x2="1448.5" y2="216" stroke="#000" stroke-width="1"/><line x1="1456.5" y1="143" x2="1456.5" y2="216" stroke="#000" stroke-width="1"/><line x1="1464.5" y1="143" x2="1464.5" y2="216" stroke="#000" stroke-width="1"/><line x1="1472.5" y1="143" x2="1472.5" y2="216" stroke="#000" stroke-width="1"/><line x1="1480.5" y1="143" x2="1480.5" y2="216" stroke="#000" stroke-width="1"/><line x1="1488.5" y1="143" x2="1488.5" y2="216" stroke="#000" stroke-width="1"/><line x1="1496.5" y1="143" x2="1496.5" y2="216" stroke="#000" stroke-width="1"/><line x1="1504.5" y1="143" x2="1504.5" y2="216" stroke="#000" stroke-width="1"/><line x1="1512.5" y1="143" x2="1512.5" y2="216" stroke="#000" stroke-width="1"/><line x1="1520.5" y1="143" x2="1520.5" y2="216" stroke="#000" stroke-width="1"/><line x1="1440" y1="143.5" x2="1520" y2="143.5" stroke="#000" stroke-width="1"/><line x1="1440" y1="151.5" x2="1520" y2="151.5" stroke="#000" stroke-width="1"/><line x1="1440" y1="159.5" x2="1520" y2="159.5" stroke="#000" stroke-width="1"/><line x1="1440" y1="167.5" x2="1520" y2="167.5" stroke="#000" stroke-width="1"/><line x1="1440" y1="175.5" x2="1520" y2="175.5" stroke="#000" stroke-width="1"/><line x1="1440" y1="183.5" x2="1520" y2="183.5" stroke="#000" stroke-width="1"/><line x1="1440" y1="191.5" x2="1520" y2="191.5" stroke="#000" stroke-width="1"/><line x1="1440" y1="199.5" x2="1520" y2="199.5" stroke="#000" stroke-width="1"/><line x1="1440" y1="207.5" x2="1520" y2="207.5" stroke="#000" stroke-width="1"/><line x1="1440" y1="215.5" x2="1520" y2="215.5" stroke="#000" stroke-width="1"/><path d="M1441,158 H1447 V149 H1454.2 V158 H1461.5 V149 H1468.8 V158 H1476.0 V149 H1483.2 V158 H1490.5 V149 H1497.8 V158 H1505.0 V149 H1512.2 V158 H1519.0 H1519" fill="none" stroke="#f0f000" stroke-width="2.5"/><path d="M1441,194 H1447.5 V185 H1454.8 V194 H1462.0 V185 H1469.2 V194 H1476.5 V185 H1483.8 V194 H1491.0 V185 H1498.2 V194 H1505.5 V185 H1512.8 V194 H1519.0 H1519" fill="none" stroke="#e02020" stroke-width="2.5"/><path d="M1440,171.5 L1441,170.2 L1442,169.1 L1443,168.7 L1444,169.0 L1445,169.9 L1446,171.1 L1447,172.5 L1448,173.7 L1449,174.3 L1450,174.2 L1451,173.4 L1452,172.2 L1453,170.8 L1454,169.6 L1455,168.8 L1456,168.7 L1457,169.3 L1458,170.5 L1459,171.9 L1460,173.1 L1461,174.0 L1462,174.3 L1463,173.9 L1464,172.8 L1465,171.5 L1466,170.2 L1467,169.1 L1468,168.7 L1469,169.0 L1470,169.9 L1471,171.1 L1472,172.5 L1473,173.7 L1474,174.3 L1475,174.2 L1476,173.4 L1477,172.2 L1478,170.8 L1479,169.6 L1480,168.8 L1481,168.7 L1482,169.3 L1483,170.5 L1484,171.9 L1485,173.1 L1486,174.0 L1487,174.3 L1488,173.9 L1489,172.8 L1490,171.5 L1491,170.2 L1492,169.1 L1493,168.7 L1494,169.0 L1495,169.9 L1496,171.1 L1497,172.5 L1498,173.7 L1499,174.3 L1500,174.2 L1501,173.4 L1502,172.2 L1503,170.8 L1504,169.6 L1505,168.8 L1506,168.7 L1507,169.3 L1508,170.5 L1509,171.9 L1510,173.1 L1511,174.0 L1512,174.3 L1513,173.9 L1514,172.8 L1515,171.5 L1516,170.2 L1517,169.1 L1518,168.7 L1519,169.0 " fill="none" stroke="#1020e0" stroke-width="2.5"/><path d="M1440,202.7 L1441,203.0 L1442,203.9 L1443,205.1 L1444,206.5 L1445,207.7 L1446,208.3 L1447,208.2 L1448,207.4 L1449,206.2 L1450,204.8 L1451,203.6 L1452,202.8 L1453,202.7 L1454,203.3 L1455,204.5 L1456,205.9 L1457,207.1 L1458,208.0 L1459,208.3 L1460,207.9 L1461,206.8 L1462,205.5 L1463,204.2 L1464,203.1 L1465,202.7 L1466,203.0 L1467,203.9 L1468,205.1 L1469,206.5 L1470,207.7 L1471,208.3 L1472,208.2 L1473,207.4 L1474,206.2 L1475,204.8 L1476,203.6 L1477,202.8 L1478,202.7 L1479,203.3 L1480,204.5 L1481,205.9 L1482,207.1 L1483,208.0 L1484,208.3 L1485,207.9 L1486,206.8 L1487,205.5 L1488,204.2 L1489,203.1 L1490,202.7 L1491,203.0 L1492,203.9 L1493,205.1 L1494,206.5 L1495,207.7 L1496,208.3 L1497,208.2 L1498,207.4 L1499,206.2 L1500,204.8 L1501,203.6 L1502,202.8 L1503,202.7 L1504,203.3 L1505,204.5 L1506,205.9 L1507,207.1 L1508,208.0 L1509,208.3 L1510,207.9 L1511,206.8 L1512,205.5 L1513,204.2 L1514,203.1 L1515,202.7 L1516,203.0 L1517,203.9 L1518,205.1 L1519,206.5 " fill="none" stroke="#20e020" stroke-width="2.5"/><defs>
<filter id="shd" x="-10%" y="-10%" width="120%" height="130%"><feGaussianBlur stdDeviation="6"/></filter>
<linearGradient id="ttl" x1="0" y1="0" x2="1" y2="0">
 <stop offset="0" stop-color="#ddd8dd"/><stop offset="0.18" stop-color="#d8d0d6"/><stop offset="0.3" stop-color="#c8b6c0"/><stop offset="1" stop-color="#c6b4bf"/></linearGradient>
<linearGradient id="frm" x1="0" y1="0" x2="0" y2="1">
 <stop offset="0" stop-color="#c8b8c2"/><stop offset="1" stop-color="#cfc4cc"/></linearGradient>
<linearGradient id="closeg" x1="0" y1="0" x2="0" y2="1">
 <stop offset="0" stop-color="#e09888"/><stop offset="0.5" stop-color="#c86050"/><stop offset="1" stop-color="#b84838"/></linearGradient>
<linearGradient id="drumv" x1="0" y1="0" x2="0" y2="1">
 <stop offset="0" stop-color="#404040"/><stop offset="0.3" stop-color="#9a9a9a"/><stop offset="0.5" stop-color="#ffffff"/><stop offset="0.7" stop-color="#9a9a9a"/><stop offset="1" stop-color="#404040"/></linearGradient>
<linearGradient id="drumvs" x1="0" y1="0" x2="1" y2="0">
 <stop offset="0" stop-color="#000" stop-opacity="0.2"/><stop offset="0.25" stop-color="#000" stop-opacity="0"/><stop offset="0.75" stop-color="#000" stop-opacity="0"/><stop offset="1" stop-color="#000" stop-opacity="0.2"/></linearGradient>
<linearGradient id="drumh" x1="0" y1="0" x2="1" y2="0">
 <stop offset="0" stop-color="#3a3a3a"/><stop offset="0.5" stop-color="#f8f8f8"/><stop offset="1" stop-color="#3a3a3a"/></linearGradient>
<linearGradient id="drumhs" x1="0" y1="0" x2="0" y2="1">
 <stop offset="0" stop-color="#000" stop-opacity="0.35"/><stop offset="0.3" stop-color="#000" stop-opacity="0"/><stop offset="0.7" stop-color="#000" stop-opacity="0"/><stop offset="1" stop-color="#000" stop-opacity="0.35"/></linearGradient>
<radialGradient id="knob" cx="0.38" cy="0.3" r="0.75">
 <stop offset="0" stop-color="#e8e8e8"/><stop offset="0.55" stop-color="#a8a8a8"/><stop offset="1" stop-color="#505050"/></radialGradient>
<linearGradient id="cap" x1="0" y1="0" x2="1" y2="1">
 <stop offset="0" stop-color="#8a8a8a"/><stop offset="0.35" stop-color="#c8c8c8"/><stop offset="0.5" stop-color="#f4f4f4"/><stop offset="0.62" stop-color="#a0a0a0"/><stop offset="1" stop-color="#707070"/></linearGradient>
<linearGradient id="btnd" x1="0" y1="0" x2="1" y2="1">
 <stop offset="0" stop-color="#c0c0c0"/><stop offset="0.5" stop-color="#606060"/><stop offset="1" stop-color="#303030"/></linearGradient>
<linearGradient id="btnp" x1="0" y1="0" x2="1" y2="1">
 <stop offset="0" stop-color="#fff4f4"/><stop offset="0.5" stop-color="#f8c8c8"/><stop offset="1" stop-color="#e89898"/></linearGradient>
<linearGradient id="thumb" x1="0" y1="0" x2="0" y2="1">
 <stop offset="0" stop-color="#f4f4f4"/><stop offset="1" stop-color="#c8c8c8"/></linearGradient>
</defs><rect x="1262" y="229" width="708" height="463" fill="#000" opacity="0.65" filter="url(#shd)"/><rect x="1261" y="226" width="705" height="458" fill="#1a1a1a"/><rect x="1262" y="227" width="703" height="456" fill="#fafafa"/><rect x="1263" y="228" width="701" height="454" fill="url(#frm)"/><rect x="1263" y="228" width="701" height="21" fill="url(#ttl)"/><rect x="1263" y="249" width="5" height="433" fill="#cabcc8"/><rect x="1403" y="224" width="130" height="8" fill="#b06a7a" opacity="0.35" filter="url(#shd)"/><text x="1269.8" y="242.7" font-size="12" fill="#141414" textLength="104.5" lengthAdjust="spacingAndGlyphs">Digital Oscilloscope</text><rect x="1943.5" y="232.5" width="16" height="15" rx="2.5" fill="url(#closeg)" stroke="#7a3028" stroke-width="1"/><path d="M1948.5,237 L1954.5,243 M1954.5,237 L1948.5,243" stroke="#fff" stroke-width="1.7"/><rect x="1267" y="250" width="409" height="427" fill="#101010"/><rect x="1268" y="251" width="407" height="425" fill="#f6f6f6"/><rect x="1270" y="253" width="405" height="405" fill="#000"/><rect x="1272" y="254" width="1" height="402" fill="#153f15"/><rect x="1271" y="255" width="403" height="1" fill="#153f15"/><rect x="1292" y="254" width="1" height="402" fill="#153f15"/><rect x="1271" y="275" width="403" height="1" fill="#153f15"/><rect x="1312" y="254" width="1" height="402" fill="#153f15"/><rect x="1271" y="295" width="403" height="1" fill="#153f15"/><rect x="1332" y="254" width="1" height="402" fill="#153f15"/><rect x="1271" y="315" width="403" height="1" fill="#153f15"/><rect x="1352" y="254" width="1" height="402" fill="#153f15"/><rect x="1271" y="335" width="403" height="1" fill="#153f15"/><rect x="1372" y="254" width="1" height="402" fill="#153f15"/><rect x="1271" y="355" width="403" height="1" fill="#153f15"/><rect x="1392" y="254" width="1" height="402" fill="#153f15"/><rect x="1271" y="375" width="403" height="1" fill="#153f15"/><rect x="1412" y="254" width="1" height="402" fill="#153f15"/><rect x="1271" y="395" width="403" height="1" fill="#153f15"/><rect x="1432" y="254" width="1" height="402" fill="#153f15"/><rect x="1271" y="415" width="403" height="1" fill="#153f15"/><rect x="1452" y="254" width="1" height="402" fill="#153f15"/><rect x="1271" y="435" width="403" height="1" fill="#153f15"/><rect x="1472" y="254" width="1" height="402" fill="#153f15"/><rect x="1271" y="455" width="403" height="1" fill="#153f15"/><rect x="1492" y="254" width="1" height="402" fill="#153f15"/><rect x="1271" y="475" width="403" height="1" fill="#153f15"/><rect x="1512" y="254" width="1" height="402" fill="#153f15"/><rect x="1271" y="495" width="403" height="1" fill="#153f15"/><rect x="1532" y="254" width="1" height="402" fill="#153f15"/><rect x="1271" y="515" width="403" height="1" fill="#153f15"/><rect x="1552" y="254" width="1" height="402" fill="#153f15"/><rect x="1271" y="535" width="403" height="1" fill="#153f15"/><rect x="1572" y="254" width="1" height="402" fill="#153f15"/><rect x="1271" y="555" width="403" height="1" fill="#153f15"/><rect x="1592" y="254" width="1" height="402" fill="#153f15"/><rect x="1271" y="575" width="403" height="1" fill="#153f15"/><rect x="1612" y="254" width="1" height="402" fill="#153f15"/><rect x="1271" y="595" width="403" height="1" fill="#153f15"/><rect x="1632" y="254" width="1" height="402" fill="#153f15"/><rect x="1271" y="615" width="403" height="1" fill="#153f15"/><rect x="1652" y="254" width="1" height="402" fill="#153f15"/><rect x="1271" y="635" width="403" height="1" fill="#153f15"/><rect x="1672" y="254" width="1" height="402" fill="#153f15"/><rect x="1271" y="655" width="403" height="1" fill="#153f15"/><rect x="1271" y="254" width="403" height="1" fill="#2a6a2a"/><rect x="1673" y="254" width="1" height="402" fill="#3a8a3a"/><rect x="1414" y="255" width="1" height="400" fill="#9c9c9c"/><rect x="1479" y="255" width="1" height="400" fill="#9c9c9c"/><rect x="1271" y="496" width="402" height="1" fill="#9c9c9c"/><line x1="1392.5" y1="255" x2="1392.5" y2="655" stroke="#c8c8c8" stroke-width="1" stroke-dasharray="4,3"/><path d="M1272,407.5 H1372.5 V287.5 H1391.5 V322 H1392.5 V407.5 H1572.5 V287.5 H1591.5 V382 H1592.5 V407.5 H1673" fill="none" stroke="#f0f070" stroke-width="1.4"/><rect x="1271" y="544" width="402" height="1.3" fill="#78d078"/><path d="M1272,541.5 H1372.5 V419.5 H1391 V428 H1392.5 V541.5 H1572.5 V419.5 H1591.5 V541.5 H1673" fill="none" stroke="#c84078" stroke-width="1.4"/><text x="1481.5" y="479" font-size="10.5" fill="#a8a8a8" textLength="36" lengthAdjust="spacingAndGlyphs">4.35 mS</text><text x="1481.5" y="491.5" font-size="10.5" fill="#d04888" textLength="45" lengthAdjust="spacingAndGlyphs">245.00 mV</text><text x="1416.5" y="525.5" font-size="10.5" fill="#a8a8a8" textLength="35" lengthAdjust="spacingAndGlyphs">1.10 mS</text><text x="1416.5" y="537" font-size="10.5" fill="#d04888" textLength="40" lengthAdjust="spacingAndGlyphs">15.00 mV</text><rect x="1270" y="658" width="406" height="18" fill="#101010"/><rect x="1271" y="659" width="404" height="16" fill="#efefef"/><path d="M1274,666.5 L1280,662.5 L1280,670.5 Z" fill="#404040"/><path d="M1669,666.5 L1664,662.5 L1664,670.5 Z" fill="#404040"/><rect x="1635.5" y="660.5" width="15" height="13" rx="1" fill="url(#thumb)" stroke="#a8a8a8"/><rect x="1675" y="250" width="285" height="428" fill="#101010"/><rect x="1676" y="251" width="283" height="426" fill="#f4f4f4"/><rect x="1677" y="252" width="281" height="424" fill="#a9a9a9"/><rect x="1769" y="250" width="1" height="427" fill="#101010"/><rect x="1770" y="251" width="1" height="426" fill="#f4f4f4"/><rect x="1864" y="250" width="1" height="427" fill="#101010"/><rect x="1865" y="251" width="1" height="426" fill="#f4f4f4"/><rect x="1675" y="278" width="284" height="1" fill="#101010"/><rect x="1676" y="279" width="283" height="1" fill="#f4f4f4"/><rect x="1675" y="463" width="284" height="1" fill="#101010"/><rect x="1676" y="464" width="283" height="1" fill="#f4f4f4"/><rect x="1675" y="490" width="284" height="1" fill="#101010"/><rect x="1676" y="491" width="283" height="1" fill="#f4f4f4"/><rect x="1675" y="675" width="284" height="1" fill="#101010"/><rect x="1676" y="676" width="283" height="1" fill="#f4f4f4"/><rect x="1769" y="250" width="1" height="427" fill="#101010"/><rect x="1864" y="250" width="1" height="427" fill="#101010"/><text x="1719" y="271" font-size="12.5" fill="#f0a0a8" textLength="41.5" lengthAdjust="spacingAndGlyphs" text-anchor="middle" font-weight="bold">Trigger</text><text x="1816" y="271" font-size="12.5" fill="#f2f220" textLength="58" lengthAdjust="spacingAndGlyphs" text-anchor="middle" font-weight="bold">Channel A</text><text x="1911" y="271" font-size="12.5" fill="#e0208c" textLength="58" lengthAdjust="spacingAndGlyphs" text-anchor="middle" font-weight="bold">Channel C</text><text x="1720" y="482.5" font-size="12.5" fill="#e08434" textLength="60.5" lengthAdjust="spacingAndGlyphs" text-anchor="middle" font-weight="bold">Horizontal</text><text x="1816" y="482.5" font-size="12.5" fill="#2094e4" textLength="58" lengthAdjust="spacingAndGlyphs" text-anchor="middle" font-weight="bold">Channel B</text><text x="1911" y="482.5" font-size="12.5" fill="#20a050" textLength="58" lengthAdjust="spacingAndGlyphs" text-anchor="middle" font-weight="bold">Channel D</text><text x="1707.5" y="288.5" font-size="10" fill="#303030" textLength="21.5" lengthAdjust="spacingAndGlyphs" text-anchor="middle">Level</text><rect x="1688" y="292" width="39" height="82" fill="#101010"/><rect x="1689" y="293" width="37" height="80" fill="#f0f0f0"/><rect x="1690" y="294" width="36" height="79" fill="#a9a9a9"/><rect x="1695" y="295" width="25" height="76" fill="url(#drumv)"/><rect x="1695" y="295" width="25" height="76" fill="url(#drumvs)"/><rect x="1694" y="295" width="1" height="76" fill="#202020"/><rect x="1720" y="295" width="1" height="76" fill="#202020"/><rect x="1696" y="297.0" width="4" height="0.8" fill="#505050"/><rect x="1715" y="297.0" width="4" height="0.8" fill="#505050"/><rect x="1696" y="301.0" width="3" height="0.8" fill="#505050"/><rect x="1716" y="301.0" width="3" height="0.8" fill="#505050"/><rect x="1696" y="305.0" width="4" height="0.8" fill="#505050"/><rect x="1715" y="305.0" width="4" height="0.8" fill="#505050"/><rect x="1696" y="309.0" width="3" height="0.8" fill="#505050"/><rect x="1716" y="309.0" width="3" height="0.8" fill="#505050"/><rect x="1696" y="313.0" width="4" height="0.8" fill="#505050"/><rect x="1715" y="313.0" width="4" height="0.8" fill="#505050"/><rect x="1696" y="317.0" width="3" height="0.8" fill="#505050"/><rect x="1716" y="317.0" width="3" height="0.8" fill="#505050"/><rect x="1696" y="321.0" width="4" height="0.8" fill="#505050"/><rect x="1715" y="321.0" width="4" height="0.8" fill="#505050"/><rect x="1696" y="325.0" width="3" height="0.8" fill="#505050"/><rect x="1716" y="325.0" width="3" height="0.8" fill="#505050"/><rect x="1696" y="329.0" width="4" height="0.8" fill="#505050"/><rect x="1715" y="329.0" width="4" height="0.8" fill="#505050"/><rect x="1696" y="333.0" width="3" height="0.8" fill="#505050"/><rect x="1716" y="333.0" width="3" height="0.8" fill="#505050"/><rect x="1696" y="337.0" width="4" height="0.8" fill="#505050"/><rect x="1715" y="337.0" width="4" height="0.8" fill="#505050"/><rect x="1696" y="341.0" width="3" height="0.8" fill="#505050"/><rect x="1716" y="341.0" width="3" height="0.8" fill="#505050"/><rect x="1696" y="345.0" width="4" height="0.8" fill="#505050"/><rect x="1715" y="345.0" width="4" height="0.8" fill="#505050"/><rect x="1696" y="349.0" width="3" height="0.8" fill="#505050"/><rect x="1716" y="349.0" width="3" height="0.8" fill="#505050"/><rect x="1696" y="353.0" width="4" height="0.8" fill="#505050"/><rect x="1715" y="353.0" width="4" height="0.8" fill="#505050"/><rect x="1696" y="357.0" width="3" height="0.8" fill="#505050"/><rect x="1716" y="357.0" width="3" height="0.8" fill="#505050"/><rect x="1696" y="361.0" width="4" height="0.8" fill="#505050"/><rect x="1715" y="361.0" width="4" height="0.8" fill="#505050"/><rect x="1696" y="365.0" width="3" height="0.8" fill="#505050"/><rect x="1716" y="365.0" width="3" height="0.8" fill="#505050"/><rect x="1696" y="369.0" width="4" height="0.8" fill="#505050"/><rect x="1715" y="369.0" width="4" height="0.8" fill="#505050"/><text x="1707.5" y="309.2" font-size="9.5" fill="#303030" text-anchor="middle">-10</text><text x="1707.5" y="328.5" font-size="9.5" fill="#303030" text-anchor="middle">0</text><text x="1707.5" y="349.0" font-size="9.5" fill="#303030" text-anchor="middle">10</text><text x="1707.5" y="368.5" font-size="9.5" fill="#303030" text-anchor="middle">20</text><path d="M1689,324 L1695,330 L1689,336 Z" fill="#e00000"/><path d="M1726,324 L1720,330 L1726,336 Z" fill="#e00000"/><path d="M1677,325 L1682,319 L1687,325 Z M1677,335 L1682,341 L1687,335 Z" fill="#f0a0a8"/><rect x="1681" y="324" width="2" height="12" fill="#f0a0a8"/><text x="1750.5" y="294.6" font-size="9.5" fill="#303030" text-anchor="end">AC</text><text x="1750.5" y="308.5" font-size="9.5" fill="#303030" text-anchor="end">DC</text><rect x="1753" y="281" width="15" height="34" fill="#101010"/><rect x="1754" y="282" width="13" height="32" fill="#f0f0f0"/><rect x="1755" y="283" width="12" height="31" fill="#a9a9a9"/><rect x="1758.5" y="287" width="4" height="22" fill="#101010"/><rect x="1759.5" y="288" width="2" height="20" fill="#f0f0f0" opacity="0.25"/><rect x="1756" y="297" width="9" height="14" fill="#e8e8e8" stroke="#606060" stroke-width="1"/><rect x="1758" y="299.0" width="5" height="1" fill="#707070"/><rect x="1758" y="301.4" width="5" height="1" fill="#707070"/><rect x="1758" y="303.8" width="5" height="1" fill="#707070"/><rect x="1758" y="306.2" width="5" height="1" fill="#707070"/><rect x="1758" y="308.6" width="5" height="1" fill="#707070"/><path d="M1742,340 H1746 V331 H1749 M1742,343 H1746 V352 H1749" fill="none" stroke="#202020" stroke-width="1.5"/><rect x="1753" y="326" width="15" height="33" fill="#101010"/><rect x="1754" y="327" width="13" height="31" fill="#f0f0f0"/><rect x="1755" y="328" width="12" height="30" fill="#a9a9a9"/><rect x="1758.5" y="332" width="4" height="21" fill="#101010"/><rect x="1759.5" y="333" width="2" height="19" fill="#f0f0f0" opacity="0.25"/><rect x="1756" y="341" width="9" height="14" fill="#e8e8e8" stroke="#606060" stroke-width="1"/><rect x="1758" y="343.0" width="5" height="1" fill="#707070"/><rect x="1758" y="345.4" width="5" height="1" fill="#707070"/><rect x="1758" y="347.8" width="5" height="1" fill="#707070"/><rect x="1758" y="350.2" width="5" height="1" fill="#707070"/><rect x="1758" y="352.6" width="5" height="1" fill="#707070"/><text x="1750.5" y="383" font-size="9.5" fill="#303030" text-anchor="end">Auto</text><rect x="1753.5" y="372.5" width="14" height="14" fill="url(#btnp)" stroke="#505050" stroke-width="1"/><text x="1750.5" y="399" font-size="9.5" fill="#303030" text-anchor="end">One-Shot</text><rect x="1753.5" y="388.5" width="14" height="14" fill="url(#btnd)" stroke="#505050" stroke-width="1"/><text x="1750.5" y="415" font-size="9.5" fill="#303030" text-anchor="end">Cursors</text><rect x="1753.5" y="404.5" width="14" height="14" fill="url(#btnp)" stroke="#505050" stroke-width="1"/><text x="1722.5" y="433.5" font-size="10" fill="#303030" textLength="28" lengthAdjust="spacingAndGlyphs" text-anchor="middle">Source</text><text x="1700" y="444.3" font-size="10" fill="#f0f020" text-anchor="middle">A</text><text x="1714.6" y="444.3" font-size="10" fill="#2090e0" text-anchor="middle">B</text><text x="1729" y="444.3" font-size="10" fill="#e0208c" text-anchor="middle">C</text><text x="1743.5" y="444.3" font-size="10" fill="#20a050" text-anchor="middle">D</text><rect x="1691" y="447" width="63" height="14" fill="#101010"/><rect x="1692" y="448" width="61" height="12" fill="#f0f0f0"/><rect x="1693" y="449" width="60" height="11" fill="#a9a9a9"/><rect x="1706" y="452" width="44" height="3" fill="#101010"/><rect x="1693.5" y="449.5" width="14" height="10" fill="#e0e0e0" stroke="#606060"/><rect x="1696.0" y="451" width="1" height="7" fill="#606060"/><rect x="1698.4" y="451" width="1" height="7" fill="#606060"/><rect x="1700.8" y="451" width="1" height="7" fill="#606060"/><rect x="1703.2" y="451" width="1" height="7" fill="#606060"/><rect x="1705.6" y="451" width="1" height="7" fill="#606060"/><text x="1800" y="288.9" font-size="10" fill="#303030" textLength="32" lengthAdjust="spacingAndGlyphs" text-anchor="middle">Position</text><rect x="1782" y="291" width="39" height="81" fill="#101010"/><rect x="1783" y="292" width="37" height="79" fill="#f0f0f0"/><rect x="1784" y="293" width="36" height="78" fill="#a9a9a9"/><rect x="1789" y="294" width="25" height="75" fill="url(#drumv)"/><rect x="1789" y="294" width="25" height="75" fill="url(#drumvs)"/><rect x="1788" y="294" width="1" height="75" fill="#202020"/><rect x="1814" y="294" width="1" height="75" fill="#202020"/><rect x="1790" y="296.0" width="4" height="0.8" fill="#505050"/><rect x="1809" y="296.0" width="4" height="0.8" fill="#505050"/><rect x="1790" y="300.0" width="3" height="0.8" fill="#505050"/><rect x="1810" y="300.0" width="3" height="0.8" fill="#505050"/><rect x="1790" y="304.0" width="4" height="0.8" fill="#505050"/><rect x="1809" y="304.0" width="4" height="0.8" fill="#505050"/><rect x="1790" y="308.0" width="3" height="0.8" fill="#505050"/><rect x="1810" y="308.0" width="3" height="0.8" fill="#505050"/><rect x="1790" y="312.0" width="4" height="0.8" fill="#505050"/><rect x="1809" y="312.0" width="4" height="0.8" fill="#505050"/><rect x="1790" y="316.0" width="3" height="0.8" fill="#505050"/><rect x="1810" y="316.0" width="3" height="0.8" fill="#505050"/><rect x="1790" y="320.0" width="4" height="0.8" fill="#505050"/><rect x="1809" y="320.0" width="4" height="0.8" fill="#505050"/><rect x="1790" y="324.0" width="3" height="0.8" fill="#505050"/><rect x="1810" y="324.0" width="3" height="0.8" fill="#505050"/><rect x="1790" y="328.0" width="4" height="0.8" fill="#505050"/><rect x="1809" y="328.0" width="4" height="0.8" fill="#505050"/><rect x="1790" y="332.0" width="3" height="0.8" fill="#505050"/><rect x="1810" y="332.0" width="3" height="0.8" fill="#505050"/><rect x="1790" y="336.0" width="4" height="0.8" fill="#505050"/><rect x="1809" y="336.0" width="4" height="0.8" fill="#505050"/><rect x="1790" y="340.0" width="3" height="0.8" fill="#505050"/><rect x="1810" y="340.0" width="3" height="0.8" fill="#505050"/><rect x="1790" y="344.0" width="4" height="0.8" fill="#505050"/><rect x="1809" y="344.0" width="4" height="0.8" fill="#505050"/><rect x="1790" y="348.0" width="3" height="0.8" fill="#505050"/><rect x="1810" y="348.0" width="3" height="0.8" fill="#505050"/><rect x="1790" y="352.0" width="4" height="0.8" fill="#505050"/><rect x="1809" y="352.0" width="4" height="0.8" fill="#505050"/><rect x="1790" y="356.0" width="3" height="0.8" fill="#505050"/><rect x="1810" y="356.0" width="3" height="0.8" fill="#505050"/><rect x="1790" y="360.0" width="4" height="0.8" fill="#505050"/><rect x="1809" y="360.0" width="4" height="0.8" fill="#505050"/><rect x="1790" y="364.0" width="3" height="0.8" fill="#505050"/><rect x="1810" y="364.0" width="3" height="0.8" fill="#505050"/><text x="1801.5" y="299.5" font-size="9.5" fill="#303030" text-anchor="middle">30</text><text x="1801.5" y="317.5" font-size="9.5" fill="#303030" text-anchor="middle">40</text><text x="1801.5" y="337.0" font-size="9.5" fill="#303030" text-anchor="middle">50</text><text x="1801.5" y="356.3" font-size="9.5" fill="#303030" text-anchor="middle">60</text><path d="M1783,324 L1789,330 L1783,336 Z" fill="#e00000"/><path d="M1820,324 L1814,330 L1820,336 Z" fill="#e00000"/><path d="M1771,325 L1776,319 L1781,325 Z M1771,335 L1776,341 L1781,335 Z" fill="#f0f020"/><rect x="1775" y="324" width="2" height="12" fill="#f0f020"/><text x="1845.5" y="294.9" font-size="9.5" fill="#282828" text-anchor="end">AC</text><text x="1845.5" y="308.1" font-size="9.5" fill="#282828" text-anchor="end">DC</text><text x="1845.5" y="322.6" font-size="9.5" fill="#282828" text-anchor="end">GND</text><text x="1845.5" y="335.9" font-size="9.5" fill="#282828" text-anchor="end">OFF</text><rect x="1847" y="281" width="15" height="63" fill="#101010"/><rect x="1848" y="282" width="13" height="61" fill="#f0f0f0"/><rect x="1849" y="283" width="12" height="60" fill="#a9a9a9"/><rect x="1852.5" y="287" width="4" height="51" fill="#101010"/><rect x="1853.5" y="288" width="2" height="49" fill="#f0f0f0" opacity="0.25"/><rect x="1850" y="298" width="9" height="14" fill="#e8e8e8" stroke="#606060" stroke-width="1"/><rect x="1852" y="300.0" width="5" height="1" fill="#707070"/><rect x="1852" y="302.4" width="5" height="1" fill="#707070"/><rect x="1852" y="304.8" width="5" height="1" fill="#707070"/><rect x="1852" y="307.2" width="5" height="1" fill="#707070"/><rect x="1852" y="309.6" width="5" height="1" fill="#707070"/><text x="1845.5" y="357" font-size="9.5" fill="#303030" text-anchor="end">Invert</text><rect x="1847.5" y="346" width="14" height="14" fill="url(#btnd)" stroke="#505050" stroke-width="1"/><text x="1845.5" y="373" font-size="9.5" fill="#303030" text-anchor="end">A+B</text><rect x="1847.5" y="362" width="14" height="14" fill="url(#btnd)" stroke="#505050" stroke-width="1"/><path d="M1773.5,461.3 V416.5 A44,44 0 0 1 1861.5,416.5 V461.3 H1835.5 V447.8 H1799.5 V461.3 Z" fill="#ffffff" stroke="#303030" stroke-width="1"/><line x1="1832.0" y1="390.2" x2="1838.9" y2="379.2" stroke="#303030" stroke-width="1"/><line x1="1834.8" y1="391.9" x2="1841.6" y2="380.9" stroke="#303030" stroke-width="1"/><line x1="1799.0" y1="447.8" x2="1799.0" y2="461.3" stroke="#303030"/><line x1="1836.0" y1="447.8" x2="1836.0" y2="461.3" stroke="#303030"/><line x1="1828.7" y1="388.7" x2="1830.2" y2="385.0" stroke="#202020" stroke-width="1"/><text x="1831.9" y="383.8" font-size="8.5" fill="#202020" text-anchor="middle">0.1</text><line x1="1817.5" y1="386.5" x2="1817.5" y2="382.5" stroke="#202020" stroke-width="1"/><text x="1817.5" y="381.0" font-size="8.5" fill="#202020" text-anchor="middle">0.2</text><line x1="1806.3" y1="388.7" x2="1804.8" y2="385.0" stroke="#202020" stroke-width="1"/><text x="1803.1" y="383.8" font-size="8.5" fill="#202020" text-anchor="middle">0.5</text><line x1="1795.9" y1="395.7" x2="1793.0" y2="392.9" stroke="#202020" stroke-width="1"/><text x="1789.8" y="392.8" font-size="8.5" fill="#202020" text-anchor="middle">1</text><line x1="1789.3" y1="406.2" x2="1785.6" y2="404.9" stroke="#202020" stroke-width="1"/><text x="1781.3" y="406.3" font-size="8.5" fill="#202020" text-anchor="middle">2</text><line x1="1787.5" y1="416.5" x2="1783.5" y2="416.5" stroke="#202020" stroke-width="1"/><text x="1779.0" y="419.5" font-size="8.5" fill="#202020" text-anchor="middle">5</text><line x1="1789.9" y1="428.2" x2="1786.2" y2="429.8" stroke="#202020" stroke-width="1"/><text x="1782.1" y="434.5" font-size="8.5" fill="#202020" text-anchor="middle">10</text><line x1="1795.9" y1="437.3" x2="1793.0" y2="440.1" stroke="#202020" stroke-width="1"/><text x="1789.8" y="446.2" font-size="8.5" fill="#202020" text-anchor="middle">20</text><line x1="1839.8" y1="396.4" x2="1842.8" y2="393.7" stroke="#202020" stroke-width="1"/><text x="1846.1" y="393.7" font-size="8.5" fill="#202020" text-anchor="middle">50</text><line x1="1845.9" y1="406.7" x2="1849.6" y2="405.4" stroke="#202020" stroke-width="1"/><text x="1853.9" y="407.0" font-size="8.5" fill="#202020" text-anchor="middle">20</text><line x1="1847.5" y1="416.5" x2="1851.5" y2="416.5" stroke="#202020" stroke-width="1"/><text x="1856.0" y="419.5" font-size="8.5" fill="#202020" text-anchor="middle">10</text><line x1="1844.9" y1="428.7" x2="1848.6" y2="430.3" stroke="#202020" stroke-width="1"/><text x="1852.7" y="435.2" font-size="8.5" fill="#202020" text-anchor="middle">5</text><line x1="1838.7" y1="437.7" x2="1841.5" y2="440.5" stroke="#202020" stroke-width="1"/><text x="1844.7" y="446.7" font-size="8.5" fill="#202020" text-anchor="middle">2</text><text x="1785.5" y="457.3" font-size="11" fill="#303030" text-anchor="middle">V</text><text x="1849.5" y="457.3" font-size="11" fill="#303030" text-anchor="middle">mV</text><rect x="1800.5" y="447.8" width="35" height="13.50000000000001" fill="#fafafa"/><path d="M1800.5,461.3 V447.8 H1835.5" fill="none" stroke="#101010" stroke-width="1.5"/><text x="1803.5" y="458.8" font-size="11" fill="#404080">0.5</text><circle cx="1817.5" cy="416.5" r="29.5" fill="url(#knob)"/><circle cx="1817.5" cy="416.5" r="29.5" fill="none" stroke="#404040" stroke-width="1" opacity="0.6"/><circle cx="1818.0" cy="417.0" r="17" fill="#3a3a3a" opacity="0.5"/><circle cx="1817.5" cy="416.5" r="15.5" fill="url(#cap)"/><path d="M1804,392 L1815,398 L1806,404 Z" fill="#f0f000"/><path d="M1821.5,421.5 L1827.5,425.5 L1822.5,428.5 Z" fill="#f0f000"/><text x="1894" y="288.7" font-size="10" fill="#303030" textLength="32" lengthAdjust="spacingAndGlyphs" text-anchor="middle">Position</text><rect x="1876" y="292" width="39" height="80" fill="#101010"/><rect x="1877" y="293" width="37" height="78" fill="#f0f0f0"/><rect x="1878" y="294" width="36" height="77" fill="#a9a9a9"/><rect x="1883" y="295" width="25" height="74" fill="url(#drumv)"/><rect x="1883" y="295" width="25" height="74" fill="url(#drumvs)"/><rect x="1882" y="295" width="1" height="74" fill="#202020"/><rect x="1908" y="295" width="1" height="74" fill="#202020"/><rect x="1884" y="297.0" width="4" height="0.8" fill="#505050"/><rect x="1903" y="297.0" width="4" height="0.8" fill="#505050"/><rect x="1884" y="301.0" width="3" height="0.8" fill="#505050"/><rect x="1904" y="301.0" width="3" height="0.8" fill="#505050"/><rect x="1884" y="305.0" width="4" height="0.8" fill="#505050"/><rect x="1903" y="305.0" width="4" height="0.8" fill="#505050"/><rect x="1884" y="309.0" width="3" height="0.8" fill="#505050"/><rect x="1904" y="309.0" width="3" height="0.8" fill="#505050"/><rect x="1884" y="313.0" width="4" height="0.8" fill="#505050"/><rect x="1903" y="313.0" width="4" height="0.8" fill="#505050"/><rect x="1884" y="317.0" width="3" height="0.8" fill="#505050"/><rect x="1904" y="317.0" width="3" height="0.8" fill="#505050"/><rect x="1884" y="321.0" width="4" height="0.8" fill="#505050"/><rect x="1903" y="321.0" width="4" height="0.8" fill="#505050"/><rect x="1884" y="325.0" width="3" height="0.8" fill="#505050"/><rect x="1904" y="325.0" width="3" height="0.8" fill="#505050"/><rect x="1884" y="329.0" width="4" height="0.8" fill="#505050"/><rect x="1903" y="329.0" width="4" height="0.8" fill="#505050"/><rect x="1884" y="333.0" width="3" height="0.8" fill="#505050"/><rect x="1904" y="333.0" width="3" height="0.8" fill="#505050"/><rect x="1884" y="337.0" width="4" height="0.8" fill="#505050"/><rect x="1903" y="337.0" width="4" height="0.8" fill="#505050"/><rect x="1884" y="341.0" width="3" height="0.8" fill="#505050"/><rect x="1904" y="341.0" width="3" height="0.8" fill="#505050"/><rect x="1884" y="345.0" width="4" height="0.8" fill="#505050"/><rect x="1903" y="345.0" width="4" height="0.8" fill="#505050"/><rect x="1884" y="349.0" width="3" height="0.8" fill="#505050"/><rect x="1904" y="349.0" width="3" height="0.8" fill="#505050"/><rect x="1884" y="353.0" width="4" height="0.8" fill="#505050"/><rect x="1903" y="353.0" width="4" height="0.8" fill="#505050"/><rect x="1884" y="357.0" width="3" height="0.8" fill="#505050"/><rect x="1904" y="357.0" width="3" height="0.8" fill="#505050"/><rect x="1884" y="361.0" width="4" height="0.8" fill="#505050"/><rect x="1903" y="361.0" width="4" height="0.8" fill="#505050"/><rect x="1884" y="365.0" width="3" height="0.8" fill="#505050"/><rect x="1904" y="365.0" width="3" height="0.8" fill="#505050"/><text x="1895.5" y="313.3" font-size="9.5" fill="#303030" text-anchor="middle">-100</text><text x="1895.5" y="333.4" font-size="9.5" fill="#303030" text-anchor="middle">-90</text><text x="1895.5" y="352.9" font-size="9.5" fill="#303030" text-anchor="middle">-80</text><path d="M1877,324 L1883,330 L1877,336 Z" fill="#e00000"/><path d="M1914,324 L1908,330 L1914,336 Z" fill="#e00000"/><path d="M1865,325 L1870,319 L1875,325 Z M1865,335 L1870,341 L1875,335 Z" fill="#e0208c"/><rect x="1869" y="324" width="2" height="12" fill="#e0208c"/><text x="1939.5" y="294.9" font-size="9.5" fill="#282828" text-anchor="end">AC</text><text x="1939.5" y="308.1" font-size="9.5" fill="#282828" text-anchor="end">DC</text><text x="1939.5" y="322.6" font-size="9.5" fill="#282828" text-anchor="end">GND</text><text x="1939.5" y="335.9" font-size="9.5" fill="#282828" text-anchor="end">OFF</text><rect x="1941" y="281" width="15" height="63" fill="#101010"/><rect x="1942" y="282" width="13" height="61" fill="#f0f0f0"/><rect x="1943" y="283" width="12" height="60" fill="#a9a9a9"/><rect x="1946.5" y="287" width="4" height="51" fill="#101010"/><rect x="1947.5" y="288" width="2" height="49" fill="#f0f0f0" opacity="0.25"/><rect x="1944" y="297" width="9" height="14" fill="#e8e8e8" stroke="#606060" stroke-width="1"/><rect x="1946" y="299.0" width="5" height="1" fill="#707070"/><rect x="1946" y="301.4" width="5" height="1" fill="#707070"/><rect x="1946" y="303.8" width="5" height="1" fill="#707070"/><rect x="1946" y="306.2" width="5" height="1" fill="#707070"/><rect x="1946" y="308.6" width="5" height="1" fill="#707070"/><text x="1939.5" y="357" font-size="9.5" fill="#303030" text-anchor="end">Invert</text><rect x="1941.5" y="346" width="14" height="14" fill="url(#btnd)" stroke="#505050" stroke-width="1"/><text x="1939.5" y="373" font-size="9.5" fill="#303030" text-anchor="end">C+D</text><rect x="1941.5" y="362" width="14" height="14" fill="url(#btnd)" stroke="#505050" stroke-width="1"/><path d="M1867.5,461.3 V416.5 A44,44 0 0 1 1955.5,416.5 V461.3 H1929.5 V447.8 H1893.5 V461.3 Z" fill="#ffffff" stroke="#303030" stroke-width="1"/><line x1="1926.0" y1="390.2" x2="1932.9" y2="379.2" stroke="#303030" stroke-width="1"/><line x1="1928.8" y1="391.9" x2="1935.6" y2="380.9" stroke="#303030" stroke-width="1"/><line x1="1893.0" y1="447.8" x2="1893.0" y2="461.3" stroke="#303030"/><line x1="1930.0" y1="447.8" x2="1930.0" y2="461.3" stroke="#303030"/><line x1="1922.7" y1="388.7" x2="1924.2" y2="385.0" stroke="#202020" stroke-width="1"/><text x="1925.9" y="383.8" font-size="8.5" fill="#202020" text-anchor="middle">0.1</text><line x1="1911.5" y1="386.5" x2="1911.5" y2="382.5" stroke="#202020" stroke-width="1"/><text x="1911.5" y="381.0" font-size="8.5" fill="#202020" text-anchor="middle">0.2</text><line x1="1900.3" y1="388.7" x2="1898.8" y2="385.0" stroke="#202020" stroke-width="1"/><text x="1897.1" y="383.8" font-size="8.5" fill="#202020" text-anchor="middle">0.5</text><line x1="1889.9" y1="395.7" x2="1887.0" y2="392.9" stroke="#202020" stroke-width="1"/><text x="1883.8" y="392.8" font-size="8.5" fill="#202020" text-anchor="middle">1</text><line x1="1883.3" y1="406.2" x2="1879.6" y2="404.9" stroke="#202020" stroke-width="1"/><text x="1875.3" y="406.3" font-size="8.5" fill="#202020" text-anchor="middle">2</text><line x1="1881.5" y1="416.5" x2="1877.5" y2="416.5" stroke="#202020" stroke-width="1"/><text x="1873.0" y="419.5" font-size="8.5" fill="#202020" text-anchor="middle">5</text><line x1="1883.9" y1="428.2" x2="1880.2" y2="429.8" stroke="#202020" stroke-width="1"/><text x="1876.1" y="434.5" font-size="8.5" fill="#202020" text-anchor="middle">10</text><line x1="1889.9" y1="437.3" x2="1887.0" y2="440.1" stroke="#202020" stroke-width="1"/><text x="1883.8" y="446.2" font-size="8.5" fill="#202020" text-anchor="middle">20</text><line x1="1933.8" y1="396.4" x2="1936.8" y2="393.7" stroke="#202020" stroke-width="1"/><text x="1940.1" y="393.7" font-size="8.5" fill="#202020" text-anchor="middle">50</text><line x1="1939.9" y1="406.7" x2="1943.6" y2="405.4" stroke="#202020" stroke-width="1"/><text x="1947.9" y="407.0" font-size="8.5" fill="#202020" text-anchor="middle">20</text><line x1="1941.5" y1="416.5" x2="1945.5" y2="416.5" stroke="#202020" stroke-width="1"/><text x="1950.0" y="419.5" font-size="8.5" fill="#202020" text-anchor="middle">10</text><line x1="1938.9" y1="428.7" x2="1942.6" y2="430.3" stroke="#202020" stroke-width="1"/><text x="1946.7" y="435.2" font-size="8.5" fill="#202020" text-anchor="middle">5</text><line x1="1932.7" y1="437.7" x2="1935.5" y2="440.5" stroke="#202020" stroke-width="1"/><text x="1938.7" y="446.7" font-size="8.5" fill="#202020" text-anchor="middle">2</text><text x="1879.5" y="457.3" font-size="11" fill="#303030" text-anchor="middle">V</text><text x="1943.5" y="457.3" font-size="11" fill="#303030" text-anchor="middle">mV</text><rect x="1894.5" y="447.8" width="35" height="13.50000000000001" fill="#fafafa"/><path d="M1894.5,461.3 V447.8 H1929.5" fill="none" stroke="#101010" stroke-width="1.5"/><text x="1897.5" y="458.8" font-size="11" fill="#404080">0.1</text><circle cx="1911.5" cy="416.5" r="29.5" fill="url(#knob)"/><circle cx="1911.5" cy="416.5" r="29.5" fill="none" stroke="#404040" stroke-width="1" opacity="0.6"/><circle cx="1912.0" cy="417.0" r="17" fill="#3a3a3a" opacity="0.5"/><circle cx="1911.5" cy="416.5" r="15.5" fill="url(#cap)"/><path d="M1912,392 L1923,398 L1914,404 Z" fill="#e0208c"/><path d="M1914,420 L1920,424 L1915,427 Z" fill="#e0208c"/><text x="1722" y="504" font-size="10" fill="#303030" textLength="28" lengthAdjust="spacingAndGlyphs" text-anchor="middle">Source</text><path d="M1685,512 L1697,505 V512" fill="none" stroke="#d08040" stroke-width="1.5"/><text x="1707" y="513.4" font-size="10" fill="#f0f020" text-anchor="middle">A</text><text x="1721" y="513.4" font-size="10" fill="#2090e0" text-anchor="middle">B</text><text x="1735" y="513.4" font-size="10" fill="#e0208c" text-anchor="middle">C</text><text x="1749" y="513.4" font-size="10" fill="#20a050" text-anchor="middle">D</text><rect x="1685" y="517" width="78" height="12" fill="#101010"/><rect x="1686" y="518" width="76" height="10" fill="#f0f0f0"/><rect x="1687" y="519" width="75" height="9" fill="#a9a9a9"/><rect x="1700" y="521.5" width="58" height="3" fill="#101010"/><rect x="1687.5" y="519.5" width="14" height="8" fill="#e0e0e0" stroke="#606060"/><rect x="1690.0" y="520.5" width="1" height="6" fill="#606060"/><rect x="1692.4" y="520.5" width="1" height="6" fill="#606060"/><rect x="1694.8" y="520.5" width="1" height="6" fill="#606060"/><rect x="1697.2" y="520.5" width="1" height="6" fill="#606060"/><rect x="1699.6" y="520.5" width="1" height="6" fill="#606060"/><text x="1722" y="541.8" font-size="10" fill="#303030" textLength="32" lengthAdjust="spacingAndGlyphs" text-anchor="middle">Position</text><rect x="1684" y="545" width="80" height="39" fill="#101010"/><rect x="1685" y="546" width="78" height="37" fill="#f0f0f0"/><rect x="1686" y="547" width="77" height="36" fill="#a9a9a9"/><rect x="1686" y="552" width="75" height="25" fill="url(#drumh)"/><rect x="1686" y="552" width="75" height="25" fill="url(#drumhs)"/><rect x="1688" y="553" width="1" height="4" fill="#303030"/><rect x="1688" y="572" width="1" height="4" fill="#303030"/><rect x="1693" y="553" width="1" height="2.5" fill="#303030"/><rect x="1693" y="573.5" width="1" height="2.5" fill="#303030"/><rect x="1698" y="553" width="1" height="4" fill="#303030"/><rect x="1698" y="572" width="1" height="4" fill="#303030"/><rect x="1703" y="553" width="1" height="2.5" fill="#303030"/><rect x="1703" y="573.5" width="1" height="2.5" fill="#303030"/><rect x="1708" y="553" width="1" height="4" fill="#303030"/><rect x="1708" y="572" width="1" height="4" fill="#303030"/><rect x="1713" y="553" width="1" height="2.5" fill="#303030"/><rect x="1713" y="573.5" width="1" height="2.5" fill="#303030"/><rect x="1718" y="553" width="1" height="4" fill="#303030"/><rect x="1718" y="572" width="1" height="4" fill="#303030"/><rect x="1723" y="553" width="1" height="2.5" fill="#303030"/><rect x="1723" y="573.5" width="1" height="2.5" fill="#303030"/><rect x="1728" y="553" width="1" height="4" fill="#303030"/><rect x="1728" y="572" width="1" height="4" fill="#303030"/><rect x="1733" y="553" width="1" height="2.5" fill="#303030"/><rect x="1733" y="573.5" width="1" height="2.5" fill="#303030"/><rect x="1738" y="553" width="1" height="4" fill="#303030"/><rect x="1738" y="572" width="1" height="4" fill="#303030"/><rect x="1743" y="553" width="1" height="2.5" fill="#303030"/><rect x="1743" y="573.5" width="1" height="2.5" fill="#303030"/><rect x="1748" y="553" width="1" height="4" fill="#303030"/><rect x="1748" y="572" width="1" height="4" fill="#303030"/><rect x="1753" y="553" width="1" height="2.5" fill="#303030"/><rect x="1753" y="573.5" width="1" height="2.5" fill="#303030"/><rect x="1758" y="553" width="1" height="4" fill="#303030"/><rect x="1758" y="572" width="1" height="4" fill="#303030"/><text x="1703" y="568" font-size="10" fill="#282828" text-anchor="middle">130</text><text x="1722.5" y="568" font-size="10" fill="#282828" text-anchor="middle">120</text><text x="1742" y="568" font-size="10" fill="#282828" text-anchor="middle">110</text><path d="M1716,546 L1729,546 L1722.5,552 Z M1716,583 L1729,583 L1722.5,577 Z" fill="#e00000"/><path d="M1678.5,673.0 V630.5 A44,44 0 0 1 1766.5,630.5 V673.0 H1740.5 V660.3 H1704.5 V673.0 Z" fill="#ffffff" stroke="#303030" stroke-width="1"/><line x1="1736.1" y1="603.7" x2="1742.6" y2="592.5" stroke="#303030" stroke-width="1"/><line x1="1738.9" y1="605.3" x2="1745.4" y2="594.1" stroke="#303030" stroke-width="1"/><line x1="1704.0" y1="660.3" x2="1704.0" y2="673.0" stroke="#303030"/><line x1="1741.0" y1="660.3" x2="1741.0" y2="673.0" stroke="#303030"/><line x1="1712.7" y1="602.1" x2="1711.4" y2="598.4" stroke="#202020" stroke-width="1"/><text x="1710.0" y="597.1" font-size="8.5" fill="#202020" text-anchor="middle">1</text><line x1="1720.4" y1="600.6" x2="1720.1" y2="596.6" stroke="#202020" stroke-width="1"/><text x="1719.8" y="595.1" font-size="8.5" fill="#202020" text-anchor="middle">0.5</text><line x1="1727.7" y1="601.0" x2="1728.4" y2="597.0" stroke="#202020" stroke-width="1"/><text x="1729.2" y="595.6" font-size="8.5" fill="#202020" text-anchor="middle">0.2</text><line x1="1733.7" y1="602.7" x2="1735.2" y2="599.0" stroke="#202020" stroke-width="1"/><text x="1736.9" y="597.8" font-size="8.5" fill="#202020" text-anchor="middle">0.1</text><line x1="1705.3" y1="605.9" x2="1703.0" y2="602.6" stroke="#202020" stroke-width="1"/><text x="1700.4" y="602.0" font-size="8.5" fill="#202020" text-anchor="middle">2</text><line x1="1698.2" y1="612.9" x2="1695.0" y2="610.5" stroke="#202020" stroke-width="1"/><text x="1691.4" y="610.9" font-size="8.5" fill="#202020" text-anchor="middle">5</text><line x1="1694.3" y1="620.2" x2="1690.6" y2="618.9" stroke="#202020" stroke-width="1"/><text x="1686.3" y="620.3" font-size="8.5" fill="#202020" text-anchor="middle">10</text><line x1="1692.6" y1="627.9" x2="1688.6" y2="627.5" stroke="#202020" stroke-width="1"/><text x="1684.1" y="630.1" font-size="8.5" fill="#202020" text-anchor="middle">20</text><line x1="1693.3" y1="637.2" x2="1689.4" y2="638.1" stroke="#202020" stroke-width="1"/><text x="1685.0" y="642.2" font-size="8.5" fill="#202020" text-anchor="middle">50</text><line x1="1696.3" y1="645.0" x2="1692.8" y2="647.0" stroke="#202020" stroke-width="1"/><text x="1688.8" y="652.2" font-size="8.5" fill="#202020" text-anchor="middle">100</text><line x1="1701.7" y1="652.1" x2="1698.9" y2="655.0" stroke="#202020" stroke-width="1"/><text x="1695.8" y="661.2" font-size="8.5" fill="#202020" text-anchor="middle">200</text><line x1="1742.2" y1="607.9" x2="1744.8" y2="604.8" stroke="#202020" stroke-width="1"/><text x="1747.8" y="604.4" font-size="8.5" fill="#202020" text-anchor="middle">50</text><line x1="1747.4" y1="613.7" x2="1750.7" y2="611.5" stroke="#202020" stroke-width="1"/><text x="1754.4" y="612.0" font-size="8.5" fill="#202020" text-anchor="middle">20</text><line x1="1750.9" y1="620.7" x2="1754.6" y2="619.4" stroke="#202020" stroke-width="1"/><text x="1758.9" y="621.0" font-size="8.5" fill="#202020" text-anchor="middle">10</text><line x1="1752.4" y1="628.4" x2="1756.4" y2="628.1" stroke="#202020" stroke-width="1"/><text x="1760.9" y="630.8" font-size="8.5" fill="#202020" text-anchor="middle">5</text><line x1="1751.8" y1="636.7" x2="1755.8" y2="637.6" stroke="#202020" stroke-width="1"/><text x="1760.2" y="641.5" font-size="8.5" fill="#202020" text-anchor="middle">2</text><line x1="1749.0" y1="644.6" x2="1752.5" y2="646.5" stroke="#202020" stroke-width="1"/><text x="1756.5" y="651.6" font-size="8.5" fill="#202020" text-anchor="middle">1</text><line x1="1744.4" y1="651.0" x2="1747.4" y2="653.7" stroke="#202020" stroke-width="1"/><text x="1750.7" y="659.8" font-size="8.5" fill="#202020" text-anchor="middle">0.5</text><text x="1690.5" y="669.0" font-size="11" fill="#303030" text-anchor="middle">ms</text><text x="1754.5" y="669.0" font-size="11" fill="#303030" text-anchor="middle">µs</text><rect x="1705.5" y="660.3" width="35" height="12.7" fill="#fafafa"/><path d="M1705.5,673.0 V660.3 H1740.5" fill="none" stroke="#101010" stroke-width="1.5"/><text x="1708.5" y="670.5" font-size="11" fill="#404080">1m</text><circle cx="1722.5" cy="630.5" r="29.5" fill="url(#knob)"/><circle cx="1722.5" cy="630.5" r="29.5" fill="none" stroke="#404040" stroke-width="1" opacity="0.6"/><circle cx="1723.0" cy="631.0" r="17" fill="#3a3a3a" opacity="0.5"/><circle cx="1722.5" cy="630.5" r="15.5" fill="url(#cap)"/><path d="M1708,603 L1719,609 L1710,615 Z" fill="#e07820"/><path d="M1727,638 L1733,642 L1728,645 Z" fill="#e07820"/><text x="1800" y="500" font-size="10" fill="#303030" textLength="32" lengthAdjust="spacingAndGlyphs" text-anchor="middle">Position</text><rect x="1782" y="503" width="39" height="81" fill="#101010"/><rect x="1783" y="504" width="37" height="79" fill="#f0f0f0"/><rect x="1784" y="505" width="36" height="78" fill="#a9a9a9"/><rect x="1789" y="506" width="25" height="75" fill="url(#drumv)"/><rect x="1789" y="506" width="25" height="75" fill="url(#drumvs)"/><rect x="1788" y="506" width="1" height="75" fill="#202020"/><rect x="1814" y="506" width="1" height="75" fill="#202020"/><rect x="1790" y="508.0" width="4" height="0.8" fill="#505050"/><rect x="1809" y="508.0" width="4" height="0.8" fill="#505050"/><rect x="1790" y="512.0" width="3" height="0.8" fill="#505050"/><rect x="1810" y="512.0" width="3" height="0.8" fill="#505050"/><rect x="1790" y="516.0" width="4" height="0.8" fill="#505050"/><rect x="1809" y="516.0" width="4" height="0.8" fill="#505050"/><rect x="1790" y="520.0" width="3" height="0.8" fill="#505050"/><rect x="1810" y="520.0" width="3" height="0.8" fill="#505050"/><rect x="1790" y="524.0" width="4" height="0.8" fill="#505050"/><rect x="1809" y="524.0" width="4" height="0.8" fill="#505050"/><rect x="1790" y="528.0" width="3" height="0.8" fill="#505050"/><rect x="1810" y="528.0" width="3" height="0.8" fill="#505050"/><rect x="1790" y="532.0" width="4" height="0.8" fill="#505050"/><rect x="1809" y="532.0" width="4" height="0.8" fill="#505050"/><rect x="1790" y="536.0" width="3" height="0.8" fill="#505050"/><rect x="1810" y="536.0" width="3" height="0.8" fill="#505050"/><rect x="1790" y="540.0" width="4" height="0.8" fill="#505050"/><rect x="1809" y="540.0" width="4" height="0.8" fill="#505050"/><rect x="1790" y="544.0" width="3" height="0.8" fill="#505050"/><rect x="1810" y="544.0" width="3" height="0.8" fill="#505050"/><rect x="1790" y="548.0" width="4" height="0.8" fill="#505050"/><rect x="1809" y="548.0" width="4" height="0.8" fill="#505050"/><rect x="1790" y="552.0" width="3" height="0.8" fill="#505050"/><rect x="1810" y="552.0" width="3" height="0.8" fill="#505050"/><rect x="1790" y="556.0" width="4" height="0.8" fill="#505050"/><rect x="1809" y="556.0" width="4" height="0.8" fill="#505050"/><rect x="1790" y="560.0" width="3" height="0.8" fill="#505050"/><rect x="1810" y="560.0" width="3" height="0.8" fill="#505050"/><rect x="1790" y="564.0" width="4" height="0.8" fill="#505050"/><rect x="1809" y="564.0" width="4" height="0.8" fill="#505050"/><rect x="1790" y="568.0" width="3" height="0.8" fill="#505050"/><rect x="1810" y="568.0" width="3" height="0.8" fill="#505050"/><rect x="1790" y="572.0" width="4" height="0.8" fill="#505050"/><rect x="1809" y="572.0" width="4" height="0.8" fill="#505050"/><rect x="1790" y="576.0" width="3" height="0.8" fill="#505050"/><rect x="1810" y="576.0" width="3" height="0.8" fill="#505050"/><text x="1801.5" y="512.9" font-size="9.5" fill="#303030" text-anchor="middle">-30</text><text x="1801.5" y="533.2" font-size="9.5" fill="#303030" text-anchor="middle">-20</text><text x="1801.5" y="553.2" font-size="9.5" fill="#303030" text-anchor="middle">-10</text><text x="1801.5" y="572.5" font-size="9.5" fill="#303030" text-anchor="middle">0</text><path d="M1783,536.5 L1789,542.5 L1783,548.5 Z" fill="#e00000"/><path d="M1820,536.5 L1814,542.5 L1820,548.5 Z" fill="#e00000"/><path d="M1771,537.5 L1776,531.5 L1781,537.5 Z M1771,547.5 L1776,553.5 L1781,547.5 Z" fill="#2094e4"/><rect x="1775" y="536.5" width="2" height="12" fill="#2094e4"/><text x="1845.5" y="506" font-size="9.5" fill="#282828" text-anchor="end">AC</text><text x="1845.5" y="520" font-size="9.5" fill="#282828" text-anchor="end">DC</text><text x="1845.5" y="533.5" font-size="9.5" fill="#282828" text-anchor="end">GND</text><text x="1845.5" y="547.4" font-size="9.5" fill="#282828" text-anchor="end">OFF</text><rect x="1847" y="493" width="15" height="63" fill="#101010"/><rect x="1848" y="494" width="13" height="61" fill="#f0f0f0"/><rect x="1849" y="495" width="12" height="60" fill="#a9a9a9"/><rect x="1852.5" y="499" width="4" height="51" fill="#101010"/><rect x="1853.5" y="500" width="2" height="49" fill="#f0f0f0" opacity="0.25"/><rect x="1850" y="540" width="9" height="14" fill="#e8e8e8" stroke="#606060" stroke-width="1"/><rect x="1852" y="542.0" width="5" height="1" fill="#707070"/><rect x="1852" y="544.4" width="5" height="1" fill="#707070"/><rect x="1852" y="546.8" width="5" height="1" fill="#707070"/><rect x="1852" y="549.2" width="5" height="1" fill="#707070"/><rect x="1852" y="551.6" width="5" height="1" fill="#707070"/><text x="1845.5" y="569" font-size="9.5" fill="#303030" text-anchor="end">Invert</text><rect x="1847.5" y="558" width="14" height="14" fill="url(#btnd)" stroke="#505050" stroke-width="1"/><path d="M1773.5,673.0 V630.5 A44,44 0 0 1 1861.5,630.5 V673.0 H1835.5 V660.3 H1799.5 V673.0 Z" fill="#ffffff" stroke="#303030" stroke-width="1"/><line x1="1832.0" y1="604.2" x2="1838.9" y2="593.2" stroke="#303030" stroke-width="1"/><line x1="1834.8" y1="605.9" x2="1841.6" y2="594.9" stroke="#303030" stroke-width="1"/><line x1="1799.0" y1="660.3" x2="1799.0" y2="673.0" stroke="#303030"/><line x1="1836.0" y1="660.3" x2="1836.0" y2="673.0" stroke="#303030"/><line x1="1828.7" y1="602.7" x2="1830.2" y2="599.0" stroke="#202020" stroke-width="1"/><text x="1831.9" y="597.8" font-size="8.5" fill="#202020" text-anchor="middle">0.1</text><line x1="1817.5" y1="600.5" x2="1817.5" y2="596.5" stroke="#202020" stroke-width="1"/><text x="1817.5" y="595.0" font-size="8.5" fill="#202020" text-anchor="middle">0.2</text><line x1="1806.3" y1="602.7" x2="1804.8" y2="599.0" stroke="#202020" stroke-width="1"/><text x="1803.1" y="597.8" font-size="8.5" fill="#202020" text-anchor="middle">0.5</text><line x1="1795.9" y1="609.7" x2="1793.0" y2="606.9" stroke="#202020" stroke-width="1"/><text x="1789.8" y="606.8" font-size="8.5" fill="#202020" text-anchor="middle">1</text><line x1="1789.3" y1="620.2" x2="1785.6" y2="618.9" stroke="#202020" stroke-width="1"/><text x="1781.3" y="620.3" font-size="8.5" fill="#202020" text-anchor="middle">2</text><line x1="1787.5" y1="630.5" x2="1783.5" y2="630.5" stroke="#202020" stroke-width="1"/><text x="1779.0" y="633.5" font-size="8.5" fill="#202020" text-anchor="middle">5</text><line x1="1789.9" y1="642.2" x2="1786.2" y2="643.8" stroke="#202020" stroke-width="1"/><text x="1782.1" y="648.5" font-size="8.5" fill="#202020" text-anchor="middle">10</text><line x1="1795.9" y1="651.3" x2="1793.0" y2="654.1" stroke="#202020" stroke-width="1"/><text x="1789.8" y="660.2" font-size="8.5" fill="#202020" text-anchor="middle">20</text><line x1="1839.8" y1="610.4" x2="1842.8" y2="607.7" stroke="#202020" stroke-width="1"/><text x="1846.1" y="607.7" font-size="8.5" fill="#202020" text-anchor="middle">50</text><line x1="1845.9" y1="620.7" x2="1849.6" y2="619.4" stroke="#202020" stroke-width="1"/><text x="1853.9" y="621.0" font-size="8.5" fill="#202020" text-anchor="middle">20</text><line x1="1847.5" y1="630.5" x2="1851.5" y2="630.5" stroke="#202020" stroke-width="1"/><text x="1856.0" y="633.5" font-size="8.5" fill="#202020" text-anchor="middle">10</text><line x1="1844.9" y1="642.7" x2="1848.6" y2="644.3" stroke="#202020" stroke-width="1"/><text x="1852.7" y="649.2" font-size="8.5" fill="#202020" text-anchor="middle">5</text><line x1="1838.7" y1="651.7" x2="1841.5" y2="654.5" stroke="#202020" stroke-width="1"/><text x="1844.7" y="660.7" font-size="8.5" fill="#202020" text-anchor="middle">2</text><text x="1785.5" y="669.0" font-size="11" fill="#303030" text-anchor="middle">V</text><text x="1849.5" y="669.0" font-size="11" fill="#303030" text-anchor="middle">mV</text><rect x="1800.5" y="660.3" width="35" height="12.7" fill="#fafafa"/><path d="M1800.5,673.0 V660.3 H1835.5" fill="none" stroke="#101010" stroke-width="1.5"/><text x="1803.5" y="670.5" font-size="11" fill="#404080">0.5</text><circle cx="1817.5" cy="630.5" r="29.5" fill="url(#knob)"/><circle cx="1817.5" cy="630.5" r="29.5" fill="none" stroke="#404040" stroke-width="1" opacity="0.6"/><circle cx="1818.0" cy="631.0" r="17" fill="#3a3a3a" opacity="0.5"/><circle cx="1817.5" cy="630.5" r="15.5" fill="url(#cap)"/><path d="M1803,603 L1814,609 L1805,615 Z" fill="#2094e4"/><path d="M1821,633 L1827,637 L1822,640 Z" fill="#2094e4"/><text x="1894" y="500" font-size="10" fill="#303030" textLength="32" lengthAdjust="spacingAndGlyphs" text-anchor="middle">Position</text><rect x="1876" y="503" width="39" height="81" fill="#101010"/><rect x="1877" y="504" width="37" height="79" fill="#f0f0f0"/><rect x="1878" y="505" width="36" height="78" fill="#a9a9a9"/><rect x="1883" y="506" width="25" height="75" fill="url(#drumv)"/><rect x="1883" y="506" width="25" height="75" fill="url(#drumvs)"/><rect x="1882" y="506" width="1" height="75" fill="#202020"/><rect x="1908" y="506" width="1" height="75" fill="#202020"/><rect x="1884" y="508.0" width="4" height="0.8" fill="#505050"/><rect x="1903" y="508.0" width="4" height="0.8" fill="#505050"/><rect x="1884" y="512.0" width="3" height="0.8" fill="#505050"/><rect x="1904" y="512.0" width="3" height="0.8" fill="#505050"/><rect x="1884" y="516.0" width="4" height="0.8" fill="#505050"/><rect x="1903" y="516.0" width="4" height="0.8" fill="#505050"/><rect x="1884" y="520.0" width="3" height="0.8" fill="#505050"/><rect x="1904" y="520.0" width="3" height="0.8" fill="#505050"/><rect x="1884" y="524.0" width="4" height="0.8" fill="#505050"/><rect x="1903" y="524.0" width="4" height="0.8" fill="#505050"/><rect x="1884" y="528.0" width="3" height="0.8" fill="#505050"/><rect x="1904" y="528.0" width="3" height="0.8" fill="#505050"/><rect x="1884" y="532.0" width="4" height="0.8" fill="#505050"/><rect x="1903" y="532.0" width="4" height="0.8" fill="#505050"/><rect x="1884" y="536.0" width="3" height="0.8" fill="#505050"/><rect x="1904" y="536.0" width="3" height="0.8" fill="#505050"/><rect x="1884" y="540.0" width="4" height="0.8" fill="#505050"/><rect x="1903" y="540.0" width="4" height="0.8" fill="#505050"/><rect x="1884" y="544.0" width="3" height="0.8" fill="#505050"/><rect x="1904" y="544.0" width="3" height="0.8" fill="#505050"/><rect x="1884" y="548.0" width="4" height="0.8" fill="#505050"/><rect x="1903" y="548.0" width="4" height="0.8" fill="#505050"/><rect x="1884" y="552.0" width="3" height="0.8" fill="#505050"/><rect x="1904" y="552.0" width="3" height="0.8" fill="#505050"/><rect x="1884" y="556.0" width="4" height="0.8" fill="#505050"/><rect x="1903" y="556.0" width="4" height="0.8" fill="#505050"/><rect x="1884" y="560.0" width="3" height="0.8" fill="#505050"/><rect x="1904" y="560.0" width="3" height="0.8" fill="#505050"/><rect x="1884" y="564.0" width="4" height="0.8" fill="#505050"/><rect x="1903" y="564.0" width="4" height="0.8" fill="#505050"/><rect x="1884" y="568.0" width="3" height="0.8" fill="#505050"/><rect x="1904" y="568.0" width="3" height="0.8" fill="#505050"/><rect x="1884" y="572.0" width="4" height="0.8" fill="#505050"/><rect x="1903" y="572.0" width="4" height="0.8" fill="#505050"/><rect x="1884" y="576.0" width="3" height="0.8" fill="#505050"/><rect x="1904" y="576.0" width="3" height="0.8" fill="#505050"/><text x="1895.5" y="524.8" font-size="9.5" fill="#303030" text-anchor="middle">-100</text><text x="1895.5" y="545.1" font-size="9.5" fill="#303030" text-anchor="middle">-90</text><text x="1895.5" y="565.5" font-size="9.5" fill="#303030" text-anchor="middle">-80</text><path d="M1877,536.5 L1883,542.5 L1877,548.5 Z" fill="#e00000"/><path d="M1914,536.5 L1908,542.5 L1914,548.5 Z" fill="#e00000"/><path d="M1865,537.5 L1870,531.5 L1875,537.5 Z M1865,547.5 L1870,553.5 L1875,547.5 Z" fill="#20a050"/><rect x="1869" y="536.5" width="2" height="12" fill="#20a050"/><text x="1939.5" y="506" font-size="9.5" fill="#282828" text-anchor="end">AC</text><text x="1939.5" y="520" font-size="9.5" fill="#282828" text-anchor="end">DC</text><text x="1939.5" y="533.5" font-size="9.5" fill="#282828" text-anchor="end">GND</text><text x="1939.5" y="547.4" font-size="9.5" fill="#282828" text-anchor="end">OFF</text><rect x="1941" y="493" width="15" height="63" fill="#101010"/><rect x="1942" y="494" width="13" height="61" fill="#f0f0f0"/><rect x="1943" y="495" width="12" height="60" fill="#a9a9a9"/><rect x="1946.5" y="499" width="4" height="51" fill="#101010"/><rect x="1947.5" y="500" width="2" height="49" fill="#f0f0f0" opacity="0.25"/><rect x="1944" y="525" width="9" height="14" fill="#e8e8e8" stroke="#606060" stroke-width="1"/><rect x="1946" y="527.0" width="5" height="1" fill="#707070"/><rect x="1946" y="529.4" width="5" height="1" fill="#707070"/><rect x="1946" y="531.8" width="5" height="1" fill="#707070"/><rect x="1946" y="534.2" width="5" height="1" fill="#707070"/><rect x="1946" y="536.6" width="5" height="1" fill="#707070"/><text x="1939.5" y="569" font-size="9.5" fill="#303030" text-anchor="end">Invert</text><rect x="1941.5" y="558" width="14" height="14" fill="url(#btnd)" stroke="#505050" stroke-width="1"/><path d="M1867.5,673.0 V630.5 A44,44 0 0 1 1955.5,630.5 V673.0 H1929.5 V660.3 H1893.5 V673.0 Z" fill="#ffffff" stroke="#303030" stroke-width="1"/><line x1="1926.0" y1="604.2" x2="1932.9" y2="593.2" stroke="#303030" stroke-width="1"/><line x1="1928.8" y1="605.9" x2="1935.6" y2="594.9" stroke="#303030" stroke-width="1"/><line x1="1893.0" y1="660.3" x2="1893.0" y2="673.0" stroke="#303030"/><line x1="1930.0" y1="660.3" x2="1930.0" y2="673.0" stroke="#303030"/><line x1="1922.7" y1="602.7" x2="1924.2" y2="599.0" stroke="#202020" stroke-width="1"/><text x="1925.9" y="597.8" font-size="8.5" fill="#202020" text-anchor="middle">0.1</text><line x1="1911.5" y1="600.5" x2="1911.5" y2="596.5" stroke="#202020" stroke-width="1"/><text x="1911.5" y="595.0" font-size="8.5" fill="#202020" text-anchor="middle">0.2</text><line x1="1900.3" y1="602.7" x2="1898.8" y2="599.0" stroke="#202020" stroke-width="1"/><text x="1897.1" y="597.8" font-size="8.5" fill="#202020" text-anchor="middle">0.5</text><line x1="1889.9" y1="609.7" x2="1887.0" y2="606.9" stroke="#202020" stroke-width="1"/><text x="1883.8" y="606.8" font-size="8.5" fill="#202020" text-anchor="middle">1</text><line x1="1883.3" y1="620.2" x2="1879.6" y2="618.9" stroke="#202020" stroke-width="1"/><text x="1875.3" y="620.3" font-size="8.5" fill="#202020" text-anchor="middle">2</text><line x1="1881.5" y1="630.5" x2="1877.5" y2="630.5" stroke="#202020" stroke-width="1"/><text x="1873.0" y="633.5" font-size="8.5" fill="#202020" text-anchor="middle">5</text><line x1="1883.9" y1="642.2" x2="1880.2" y2="643.8" stroke="#202020" stroke-width="1"/><text x="1876.1" y="648.5" font-size="8.5" fill="#202020" text-anchor="middle">10</text><line x1="1889.9" y1="651.3" x2="1887.0" y2="654.1" stroke="#202020" stroke-width="1"/><text x="1883.8" y="660.2" font-size="8.5" fill="#202020" text-anchor="middle">20</text><line x1="1933.8" y1="610.4" x2="1936.8" y2="607.7" stroke="#202020" stroke-width="1"/><text x="1940.1" y="607.7" font-size="8.5" fill="#202020" text-anchor="middle">50</text><line x1="1939.9" y1="620.7" x2="1943.6" y2="619.4" stroke="#202020" stroke-width="1"/><text x="1947.9" y="621.0" font-size="8.5" fill="#202020" text-anchor="middle">20</text><line x1="1941.5" y1="630.5" x2="1945.5" y2="630.5" stroke="#202020" stroke-width="1"/><text x="1950.0" y="633.5" font-size="8.5" fill="#202020" text-anchor="middle">10</text><line x1="1938.9" y1="642.7" x2="1942.6" y2="644.3" stroke="#202020" stroke-width="1"/><text x="1946.7" y="649.2" font-size="8.5" fill="#202020" text-anchor="middle">5</text><line x1="1932.7" y1="651.7" x2="1935.5" y2="654.5" stroke="#202020" stroke-width="1"/><text x="1938.7" y="660.7" font-size="8.5" fill="#202020" text-anchor="middle">2</text><text x="1879.5" y="669.0" font-size="11" fill="#303030" text-anchor="middle">V</text><text x="1943.5" y="669.0" font-size="11" fill="#303030" text-anchor="middle">mV</text><rect x="1894.5" y="660.3" width="35" height="12.7" fill="#fafafa"/><path d="M1894.5,673.0 V660.3 H1929.5" fill="none" stroke="#101010" stroke-width="1.5"/><text x="1897.5" y="670.5" font-size="11" fill="#404080">0.5</text><circle cx="1911.5" cy="630.5" r="29.5" fill="url(#knob)"/><circle cx="1911.5" cy="630.5" r="29.5" fill="none" stroke="#404040" stroke-width="1" opacity="0.6"/><circle cx="1912.0" cy="631.0" r="17" fill="#3a3a3a" opacity="0.5"/><circle cx="1911.5" cy="630.5" r="15.5" fill="url(#cap)"/><path d="M1899,603 L1910,609 L1901,615 Z" fill="#20a050"/><path d="M1915,631 L1921,635 L1916,638 Z" fill="#20a050"/>
</svg></body></html>
